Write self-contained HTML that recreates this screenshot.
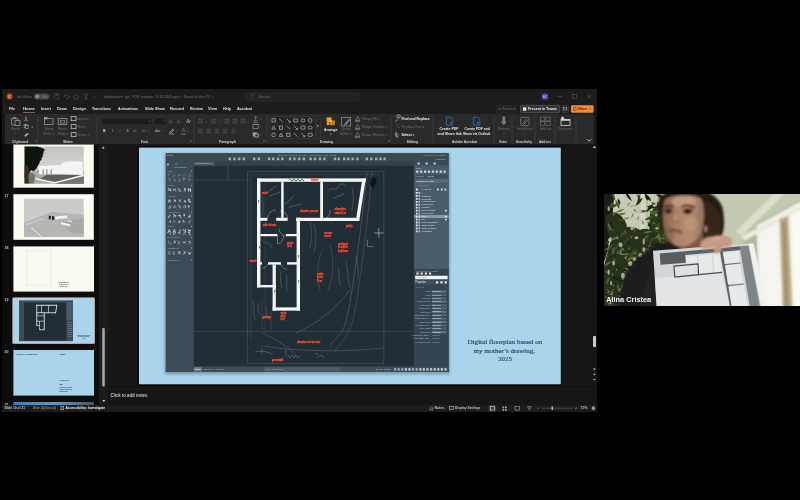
<!DOCTYPE html>
<html><head><meta charset="utf-8"><title>Meeting</title>
<style>html,body{margin:0;padding:0;background:#000;width:800px;height:500px;overflow:hidden}svg{display:block}</style>
</head><body>
<svg width="800" height="500" viewBox="0 0 800 500">
<defs>
<filter id="b03" x="-5%" y="-5%" width="110%" height="110%"><feGaussianBlur stdDeviation="0.45"/></filter>
<filter id="b06" x="-5%" y="-5%" width="110%" height="110%"><feGaussianBlur stdDeviation="0.6"/></filter>
<filter id="b08" x="-10%" y="-10%" width="120%" height="120%"><feGaussianBlur stdDeviation="0.8"/></filter>
<filter id="b1" x="-10%" y="-10%" width="120%" height="120%"><feGaussianBlur stdDeviation="1"/></filter>
<filter id="b2" x="-10%" y="-10%" width="120%" height="120%"><feGaussianBlur stdDeviation="2"/></filter>
<filter id="b3" x="-20%" y="-20%" width="140%" height="140%"><feGaussianBlur stdDeviation="3"/></filter>
<filter id="b5" x="-20%" y="-20%" width="140%" height="140%"><feGaussianBlur stdDeviation="5"/></filter>
<clipPath id="cwin"><rect x="2" y="89" width="595" height="323"/></clipPath>
<clipPath id="ccam"><rect x="604" y="194" width="196" height="112"/></clipPath>
<clipPath id="cthumbs"><rect x="2" y="144.5" width="105" height="260.5"/></clipPath>
<clipPath id="ccad"><rect x="165.6" y="153" width="283.2" height="219"/></clipPath>
</defs>
<rect width="800" height="500" fill="#000"/>
<g clip-path="url(#cwin)" filter="url(#b03)">
<rect x="2.00" y="89.00" width="595.00" height="323.00" fill="#121212"/>
<rect x="2.00" y="89.00" width="595.00" height="25.00" fill="#1a1a1a"/>
<circle cx="9.60" cy="96.40" r="3.10" fill="#b83a1a" />
<circle cx="9.60" cy="96.40" r="1.60" fill="#e89878" />
<circle cx="10.00" cy="96.40" r="0.90" fill="#b83a1a" />
<text x="17.00" y="97.83" font-size="3.8" fill="#5c5c5c" font-weight="bold" font-family='"Liberation Sans",sans-serif' textLength="15.00" lengthAdjust="spacingAndGlyphs" >AutoSave</text>
<rect x="34.00" y="93.40" width="15.50" height="6.20" fill="#4a4a4a" rx="3.1"/>
<circle cx="37.30" cy="96.50" r="2.10" fill="#8a8a8a" />
<text x="42.00" y="97.62" font-size="3.2" fill="#777" font-weight="bold" font-family='"Liberation Sans",sans-serif' textLength="5.00" lengthAdjust="spacingAndGlyphs" >Off</text>
<rect x="54.30" y="94.00" width="4.70" height="5.00" fill="none" stroke="#4c4c4c" stroke-width="0.7" rx="0.6"/>
<rect x="55.50" y="94.00" width="2.30" height="1.60" fill="#4c4c4c"/>
<path d="M64 97 a2.2 2.2 0 1 1 2 2.2" fill="none" stroke="#555" stroke-width="0.8" />
<text x="69.30" y="97.85" font-size="3" fill="#555" font-weight="bold" font-family='"Liberation Sans",sans-serif' textLength="1.30" lengthAdjust="spacingAndGlyphs" >˅</text>
<path d="M74.5 95.2 a2.4 2.4 0 1 0 3.6 0 M76.3 93.6 v2.6" fill="none" stroke="#585858" stroke-width="0.8" />
<path d="M84 94.2 h4.4 l-1.6 2.4 v2.4 h-1.2 v-2.4 z" fill="none" stroke="#555" stroke-width="0.7" />
<text x="93.40" y="97.85" font-size="3" fill="#555" font-weight="bold" font-family='"Liberation Sans",sans-serif' textLength="1.60" lengthAdjust="spacingAndGlyphs" >˅</text>
<text x="104.00" y="97.86" font-size="3.9" fill="#5e5e5e" font-weight="bold" font-family='"Liberation Sans",sans-serif' textLength="109.50" lengthAdjust="spacingAndGlyphs" >alinacristea_ppt_FOR seminar_13.03.2025.pptx  •  Saved to this PC ˅</text>
<rect x="245.60" y="93.00" width="114.00" height="8.00" fill="#222" stroke="#333" stroke-width="0.6" rx="1"/>
<path d="M252.6 96.2 a1.3 1.3 0 1 1 0.01 0 M251.7 97.3 l-1.2 1.4" fill="none" stroke="#5a5a5a" stroke-width="0.6" />
<text x="258.00" y="98.33" font-size="3.8" fill="#5a5a5a" font-weight="bold" font-family='"Liberation Sans",sans-serif' textLength="12.50" lengthAdjust="spacingAndGlyphs" >Search</text>
<circle cx="545.00" cy="96.60" r="4.20" fill="#2c2856" />
<circle cx="545.00" cy="96.60" r="3.20" fill="#4a4590" />
<text x="545.00" y="97.75" font-size="3" fill="#c9c6ee" font-weight="bold" text-anchor="middle" font-family='"Liberation Sans",sans-serif' >AC</text>
<line x1="557.50" y1="96.60" x2="562.00" y2="96.60" stroke="#555" stroke-width="0.6" />
<rect x="572.60" y="94.60" width="3.80" height="3.80" fill="none" stroke="#555" stroke-width="0.6"/>
<path d="M587.3 94.7 l3.6 3.6 M590.9 94.7 l-3.6 3.6" fill="none" stroke="#666" stroke-width="0.6" />
<text x="9.00" y="110.24" font-size="4.4" fill="#e6e6e6" font-weight="bold" font-family='"Liberation Sans",sans-serif' textLength="6.00" lengthAdjust="spacingAndGlyphs" >File</text>
<text x="23.00" y="110.24" font-size="4.4" fill="#e6e6e6" font-weight="bold" font-family='"Liberation Sans",sans-serif' textLength="12.00" lengthAdjust="spacingAndGlyphs" >Home</text>
<text x="41.00" y="110.24" font-size="4.4" fill="#e6e6e6" font-weight="bold" font-family='"Liberation Sans",sans-serif' textLength="10.00" lengthAdjust="spacingAndGlyphs" >Insert</text>
<text x="57.00" y="110.24" font-size="4.4" fill="#e6e6e6" font-weight="bold" font-family='"Liberation Sans",sans-serif' textLength="10.00" lengthAdjust="spacingAndGlyphs" >Draw</text>
<text x="73.00" y="110.24" font-size="4.4" fill="#e6e6e6" font-weight="bold" font-family='"Liberation Sans",sans-serif' textLength="13.00" lengthAdjust="spacingAndGlyphs" >Design</text>
<text x="92.00" y="110.24" font-size="4.4" fill="#e6e6e6" font-weight="bold" font-family='"Liberation Sans",sans-serif' textLength="19.00" lengthAdjust="spacingAndGlyphs" >Transitions</text>
<text x="118.00" y="110.24" font-size="4.4" fill="#e6e6e6" font-weight="bold" font-family='"Liberation Sans",sans-serif' textLength="20.00" lengthAdjust="spacingAndGlyphs" >Animations</text>
<text x="145.00" y="110.24" font-size="4.4" fill="#e6e6e6" font-weight="bold" font-family='"Liberation Sans",sans-serif' textLength="20.00" lengthAdjust="spacingAndGlyphs" >Slide Show</text>
<text x="170.00" y="110.24" font-size="4.4" fill="#e6e6e6" font-weight="bold" font-family='"Liberation Sans",sans-serif' textLength="14.00" lengthAdjust="spacingAndGlyphs" >Record</text>
<text x="190.00" y="110.24" font-size="4.4" fill="#e6e6e6" font-weight="bold" font-family='"Liberation Sans",sans-serif' textLength="13.00" lengthAdjust="spacingAndGlyphs" >Review</text>
<text x="208.00" y="110.24" font-size="4.4" fill="#e6e6e6" font-weight="bold" font-family='"Liberation Sans",sans-serif' textLength="9.00" lengthAdjust="spacingAndGlyphs" >View</text>
<text x="223.00" y="110.24" font-size="4.4" fill="#e6e6e6" font-weight="bold" font-family='"Liberation Sans",sans-serif' textLength="8.00" lengthAdjust="spacingAndGlyphs" >Help</text>
<text x="237.00" y="110.24" font-size="4.4" fill="#e6e6e6" font-weight="bold" font-family='"Liberation Sans",sans-serif' textLength="15.00" lengthAdjust="spacingAndGlyphs" >Acrobat</text>
<rect x="23.00" y="112.00" width="12.00" height="0.70" fill="#c9826c"/>
<rect x="496.00" y="105.50" width="21.00" height="7.00" fill="#232323" stroke="#333" stroke-width="0.5" rx="1"/>
<circle cx="499.60" cy="109.00" r="1.00" fill="#555" />
<text x="502.00" y="110.33" font-size="3.8" fill="#555" font-weight="bold" font-family='"Liberation Sans",sans-serif' textLength="13.00" lengthAdjust="spacingAndGlyphs" >Record</text>
<rect x="520.50" y="105.30" width="39.30" height="7.40" fill="#333" stroke="#6a6a6a" stroke-width="0.6" rx="1.2"/>
<rect x="523.00" y="107.30" width="3.40" height="3.50" fill="#e8e8e8" rx="0.6"/>
<text x="528.00" y="110.36" font-size="3.9" fill="#f2f2f2" font-weight="bold" font-family='"Liberation Sans",sans-serif' textLength="29.00" lengthAdjust="spacingAndGlyphs" >Present in Teams</text>
<rect x="562.00" y="105.50" width="6.40" height="7.00" fill="#262626" stroke="#555" stroke-width="0.5" rx="1"/>
<rect x="563.60" y="107.40" width="3.20" height="2.60" fill="none" stroke="#aaa" stroke-width="0.6"/>
<rect x="571.00" y="105.30" width="22.60" height="7.40" fill="#f08a3c" rx="1.2"/>
<rect x="573.60" y="107.60" width="2.40" height="3.00" fill="none" stroke="#7a3a10" stroke-width="0.6"/>
<text x="577.50" y="110.36" font-size="3.9" fill="#5a2408" font-weight="bold" font-family='"Liberation Sans",sans-serif' textLength="10.00" lengthAdjust="spacingAndGlyphs" >Share</text>
<text x="589.30" y="110.35" font-size="3" fill="#5a2408" font-weight="bold" font-family='"Liberation Sans",sans-serif' textLength="1.70" lengthAdjust="spacingAndGlyphs" >˅</text>
<rect x="5.00" y="113.80" width="589.00" height="30.40" fill="#2b2b2b" rx="1.5"/>
<line x1="38.00" y1="116.00" x2="38.00" y2="143.00" stroke="#3e3e3e" stroke-width="0.6" />
<line x1="97.00" y1="116.00" x2="97.00" y2="143.00" stroke="#3e3e3e" stroke-width="0.6" />
<line x1="194.00" y1="116.00" x2="194.00" y2="143.00" stroke="#3e3e3e" stroke-width="0.6" />
<line x1="267.00" y1="116.00" x2="267.00" y2="143.00" stroke="#3e3e3e" stroke-width="0.6" />
<line x1="391.00" y1="116.00" x2="391.00" y2="143.00" stroke="#3e3e3e" stroke-width="0.6" />
<line x1="433.00" y1="116.00" x2="433.00" y2="143.00" stroke="#3e3e3e" stroke-width="0.6" />
<line x1="494.00" y1="116.00" x2="494.00" y2="143.00" stroke="#3e3e3e" stroke-width="0.6" />
<line x1="512.00" y1="116.00" x2="512.00" y2="143.00" stroke="#3e3e3e" stroke-width="0.6" />
<line x1="535.00" y1="116.00" x2="535.00" y2="143.00" stroke="#3e3e3e" stroke-width="0.6" />
<line x1="555.00" y1="116.00" x2="555.00" y2="143.00" stroke="#3e3e3e" stroke-width="0.6" />
<line x1="576.00" y1="116.00" x2="576.00" y2="143.00" stroke="#3e3e3e" stroke-width="0.6" />
<text x="12.00" y="142.76" font-size="3.6" fill="#d0d0d0" font-weight="bold" font-family='"Liberation Sans",sans-serif' textLength="16.00" lengthAdjust="spacingAndGlyphs" >Clipboard</text>
<text x="63.00" y="142.76" font-size="3.6" fill="#d0d0d0" font-weight="bold" font-family='"Liberation Sans",sans-serif' textLength="10.00" lengthAdjust="spacingAndGlyphs" >Slides</text>
<text x="141.00" y="142.76" font-size="3.6" fill="#d0d0d0" font-weight="bold" font-family='"Liberation Sans",sans-serif' textLength="7.00" lengthAdjust="spacingAndGlyphs" >Font</text>
<text x="219.00" y="142.76" font-size="3.6" fill="#d0d0d0" font-weight="bold" font-family='"Liberation Sans",sans-serif' textLength="17.00" lengthAdjust="spacingAndGlyphs" >Paragraph</text>
<text x="320.00" y="142.76" font-size="3.6" fill="#d0d0d0" font-weight="bold" font-family='"Liberation Sans",sans-serif' textLength="13.00" lengthAdjust="spacingAndGlyphs" >Drawing</text>
<text x="407.00" y="142.76" font-size="3.6" fill="#d0d0d0" font-weight="bold" font-family='"Liberation Sans",sans-serif' textLength="11.00" lengthAdjust="spacingAndGlyphs" >Editing</text>
<text x="452.00" y="142.76" font-size="3.6" fill="#d0d0d0" font-weight="bold" font-family='"Liberation Sans",sans-serif' textLength="25.00" lengthAdjust="spacingAndGlyphs" >Adobe Acrobat</text>
<text x="499.00" y="142.76" font-size="3.6" fill="#d0d0d0" font-weight="bold" font-family='"Liberation Sans",sans-serif' textLength="8.00" lengthAdjust="spacingAndGlyphs" >Voice</text>
<text x="516.00" y="142.76" font-size="3.6" fill="#d0d0d0" font-weight="bold" font-family='"Liberation Sans",sans-serif' textLength="16.00" lengthAdjust="spacingAndGlyphs" >Sensitivity</text>
<text x="539.00" y="142.76" font-size="3.6" fill="#d0d0d0" font-weight="bold" font-family='"Liberation Sans",sans-serif' textLength="12.00" lengthAdjust="spacingAndGlyphs" >Add-ins</text>
<path d="M35.5 140.4 h1.6 v1.6 M35.3 142.2 l1.6 -1.6" fill="none" stroke="#777" stroke-width="0.4" />
<path d="M190 140.4 h1.6 v1.6 M189.8 142.2 l1.6 -1.6" fill="none" stroke="#777" stroke-width="0.4" />
<path d="M263 140.4 h1.6 v1.6 M262.8 142.2 l1.6 -1.6" fill="none" stroke="#777" stroke-width="0.4" />
<path d="M388 140.4 h1.6 v1.6 M387.8 142.2 l1.6 -1.6" fill="none" stroke="#777" stroke-width="0.4" />
<rect x="11.60" y="118.40" width="5.80" height="6.60" fill="none" stroke="#9a9a9a" stroke-width="0.8" rx="0.5"/>
<rect x="15.00" y="120.60" width="5.00" height="4.80" fill="#2b2b2b" stroke="#9a9a9a" stroke-width="0.8"/>
<rect x="13.20" y="117.20" width="2.60" height="1.60" fill="#9a9a9a"/>
<text x="11.00" y="130.46" font-size="3.6" fill="#5e5e5e" font-weight="bold" font-family='"Liberation Sans",sans-serif' textLength="9.00" lengthAdjust="spacingAndGlyphs" >Paste</text>
<text x="14.60" y="134.38" font-size="2.8" fill="#5e5e5e" font-weight="bold" font-family='"Liberation Sans",sans-serif' textLength="1.60" lengthAdjust="spacingAndGlyphs" >˅</text>
<path d="M25.2 116.8 l1.6 3.2 M26.8 116.8 l-1.6 3.2" fill="none" stroke="#9a9a9a" stroke-width="0.6" />
<circle cx="25.00" cy="120.60" r="0.70" fill="#9a9a9a" />
<circle cx="27.00" cy="120.60" r="0.70" fill="#9a9a9a" />
<rect x="24.20" y="124.40" width="2.80" height="3.00" fill="none" stroke="#9a9a9a" stroke-width="0.7"/>
<rect x="25.40" y="125.60" width="2.80" height="3.00" fill="#2b2b2b" stroke="#9a9a9a" stroke-width="0.7"/>
<text x="31.40" y="127.78" font-size="2.8" fill="#9a9a9a" font-weight="bold" font-family='"Liberation Sans",sans-serif' textLength="1.60" lengthAdjust="spacingAndGlyphs" >˅</text>
<path d="M24.6 135.6 l3 -2.6 l0.8 1 l-3 2.6 z" fill="#bbb" stroke="#bbb" stroke-width="0.4" />
<rect x="44.40" y="118.60" width="8.60" height="5.80" fill="none" stroke="#9a9a9a" stroke-width="0.8"/>
<rect x="44.00" y="117.00" width="3.40" height="2.40" fill="#9a9a9a"/>
<text x="44.40" y="129.86" font-size="3.6" fill="#5e5e5e" font-weight="bold" font-family='"Liberation Sans",sans-serif' textLength="9.00" lengthAdjust="spacingAndGlyphs" >New</text>
<text x="43.20" y="134.66" font-size="3.6" fill="#5e5e5e" font-weight="bold" font-family='"Liberation Sans",sans-serif' textLength="11.00" lengthAdjust="spacingAndGlyphs" >Slide ˅</text>
<rect x="58.20" y="118.60" width="8.60" height="5.80" fill="none" stroke="#9a9a9a" stroke-width="0.8"/>
<rect x="60.60" y="120.40" width="4.00" height="2.60" fill="none" stroke="#9a9a9a" stroke-width="0.6"/>
<text x="58.00" y="129.86" font-size="3.6" fill="#5e5e5e" font-weight="bold" font-family='"Liberation Sans",sans-serif' textLength="9.40" lengthAdjust="spacingAndGlyphs" >Reuse</text>
<text x="57.60" y="134.66" font-size="3.6" fill="#5e5e5e" font-weight="bold" font-family='"Liberation Sans",sans-serif' textLength="10.00" lengthAdjust="spacingAndGlyphs" >Slides</text>
<rect x="71.20" y="116.60" width="4.80" height="4.00" fill="none" stroke="#b8b8b8" stroke-width="0.8"/>
<text x="77.40" y="119.86" font-size="3.6" fill="#5e5e5e" font-weight="bold" font-family='"Liberation Sans",sans-serif' textLength="11.60" lengthAdjust="spacingAndGlyphs" >Layout ˅</text>
<rect x="71.20" y="124.60" width="4.80" height="4.00" fill="none" stroke="#b8b8b8" stroke-width="0.8"/>
<text x="77.40" y="127.86" font-size="3.6" fill="#5e5e5e" font-weight="bold" font-family='"Liberation Sans",sans-serif' textLength="8.10" lengthAdjust="spacingAndGlyphs" >Reset</text>
<rect x="71.20" y="132.60" width="4.80" height="4.00" fill="none" stroke="#b8b8b8" stroke-width="0.8"/>
<text x="77.40" y="135.86" font-size="3.6" fill="#5e5e5e" font-weight="bold" font-family='"Liberation Sans",sans-serif' textLength="12.10" lengthAdjust="spacingAndGlyphs" >Section ˅</text>
<rect x="101.00" y="118.00" width="51.40" height="6.40" fill="#1c1c1c" stroke="#3a3a3a" stroke-width="0.5" rx="0.6"/>
<text x="148.60" y="122.38" font-size="2.8" fill="#555" font-weight="bold" font-family='"Liberation Sans",sans-serif' textLength="1.80" lengthAdjust="spacingAndGlyphs" >˅</text>
<rect x="154.00" y="118.00" width="12.60" height="6.40" fill="#1c1c1c" stroke="#3a3a3a" stroke-width="0.5" rx="0.6"/>
<text x="163.40" y="122.38" font-size="2.8" fill="#555" font-weight="bold" font-family='"Liberation Sans",sans-serif' textLength="1.80" lengthAdjust="spacingAndGlyphs" >˅</text>
<text x="169.00" y="122.67" font-size="4.2" fill="#5e5e5e" font-weight="bold" font-family='"Liberation Sans",sans-serif' textLength="4.20" lengthAdjust="spacingAndGlyphs" >A˄</text>
<text x="177.00" y="122.67" font-size="4.2" fill="#5e5e5e" font-weight="bold" font-family='"Liberation Sans",sans-serif' textLength="4.20" lengthAdjust="spacingAndGlyphs" >A˅</text>
<text x="186.00" y="122.81" font-size="4.6" fill="#9a9a9a" font-weight="bold" font-family='"Liberation Sans",sans-serif' textLength="4.40" lengthAdjust="spacingAndGlyphs" >A</text>
<path d="M188.4 122.6 l2 -2" fill="none" stroke="#c9a" stroke-width="0.7" />
<text x="103.20" y="132.47" font-size="4.2" fill="#e8e8e8" font-weight="bold" font-family='"Liberation Sans",sans-serif' textLength="2.20" lengthAdjust="spacingAndGlyphs" >B</text>
<text x="111.60" y="132.47" font-size="4.2" fill="#5e5e5e" font-weight="bold" font-family='"Liberation Sans",sans-serif' textLength="2.20" lengthAdjust="spacingAndGlyphs" >I</text>
<text x="118.40" y="132.47" font-size="4.2" fill="#5e5e5e" font-weight="bold" font-family='"Liberation Sans",sans-serif' textLength="2.20" lengthAdjust="spacingAndGlyphs" >U</text>
<text x="126.40" y="132.47" font-size="4.2" fill="#9a9a9a" font-weight="bold" font-family='"Liberation Sans",sans-serif' textLength="2.20" lengthAdjust="spacingAndGlyphs" >S</text>
<text x="133.00" y="132.47" font-size="4.2" fill="#5e5e5e" font-weight="bold" font-family='"Liberation Sans",sans-serif' textLength="3.60" lengthAdjust="spacingAndGlyphs" >ab</text>
<text x="142.00" y="132.47" font-size="4.2" fill="#5e5e5e" font-weight="bold" font-family='"Liberation Sans",sans-serif' textLength="3.60" lengthAdjust="spacingAndGlyphs" >AV</text>
<text x="147.20" y="132.31" font-size="2.6" fill="#5e5e5e" font-weight="bold" font-family='"Liberation Sans",sans-serif' textLength="1.40" lengthAdjust="spacingAndGlyphs" >˅</text>
<text x="155.00" y="132.47" font-size="4.2" fill="#9a9a9a" font-weight="bold" font-family='"Liberation Sans",sans-serif' textLength="5.00" lengthAdjust="spacingAndGlyphs" >Aa</text>
<text x="161.40" y="132.31" font-size="2.6" fill="#5e5e5e" font-weight="bold" font-family='"Liberation Sans",sans-serif' textLength="1.40" lengthAdjust="spacingAndGlyphs" >˅</text>
<path d="M169.4 132.8 l3.4 -3.6 l1 1 l-3.4 3.6 z" fill="none" stroke="#e8e8e8" stroke-width="0.6" />
<rect x="169.00" y="133.60" width="5.40" height="1.00" fill="#777"/>
<text x="176.00" y="132.31" font-size="2.6" fill="#5e5e5e" font-weight="bold" font-family='"Liberation Sans",sans-serif' textLength="1.40" lengthAdjust="spacingAndGlyphs" >˅</text>
<text x="181.60" y="132.21" font-size="4.6" fill="#5e5e5e" font-weight="bold" font-family='"Liberation Sans",sans-serif' textLength="4.00" lengthAdjust="spacingAndGlyphs" >A</text>
<rect x="181.20" y="133.60" width="4.80" height="1.00" fill="#777"/>
<text x="187.60" y="132.31" font-size="2.6" fill="#5e5e5e" font-weight="bold" font-family='"Liberation Sans",sans-serif' textLength="1.40" lengthAdjust="spacingAndGlyphs" >˅</text>
<line x1="198.00" y1="119.40" x2="203.00" y2="119.40" stroke="#5e5e5e" stroke-width="0.6" />
<line x1="198.00" y1="121.20" x2="203.00" y2="121.20" stroke="#5e5e5e" stroke-width="0.6" />
<line x1="198.00" y1="123.00" x2="203.00" y2="123.00" stroke="#5e5e5e" stroke-width="0.6" />
<line x1="211.00" y1="119.40" x2="216.00" y2="119.40" stroke="#5e5e5e" stroke-width="0.6" />
<line x1="211.00" y1="121.20" x2="216.00" y2="121.20" stroke="#5e5e5e" stroke-width="0.6" />
<line x1="211.00" y1="123.00" x2="216.00" y2="123.00" stroke="#5e5e5e" stroke-width="0.6" />
<line x1="224.40" y1="119.40" x2="229.40" y2="119.40" stroke="#5e5e5e" stroke-width="0.6" />
<line x1="224.40" y1="121.20" x2="229.40" y2="121.20" stroke="#5e5e5e" stroke-width="0.6" />
<line x1="224.40" y1="123.00" x2="229.40" y2="123.00" stroke="#5e5e5e" stroke-width="0.6" />
<line x1="232.40" y1="119.40" x2="237.40" y2="119.40" stroke="#5e5e5e" stroke-width="0.6" />
<line x1="232.40" y1="121.20" x2="237.40" y2="121.20" stroke="#5e5e5e" stroke-width="0.6" />
<line x1="232.40" y1="123.00" x2="237.40" y2="123.00" stroke="#5e5e5e" stroke-width="0.6" />
<line x1="240.60" y1="119.40" x2="245.60" y2="119.40" stroke="#5e5e5e" stroke-width="0.6" />
<line x1="240.60" y1="121.20" x2="245.60" y2="121.20" stroke="#5e5e5e" stroke-width="0.6" />
<line x1="240.60" y1="123.00" x2="245.60" y2="123.00" stroke="#5e5e5e" stroke-width="0.6" />
<text x="205.40" y="122.51" font-size="2.6" fill="#5e5e5e" font-weight="bold" font-family='"Liberation Sans",sans-serif' textLength="1.40" lengthAdjust="spacingAndGlyphs" >˅</text>
<text x="218.40" y="122.51" font-size="2.6" fill="#5e5e5e" font-weight="bold" font-family='"Liberation Sans",sans-serif' textLength="1.40" lengthAdjust="spacingAndGlyphs" >˅</text>
<text x="247.60" y="122.51" font-size="2.6" fill="#5e5e5e" font-weight="bold" font-family='"Liberation Sans",sans-serif' textLength="1.40" lengthAdjust="spacingAndGlyphs" >˅</text>
<line x1="198.00" y1="129.40" x2="202.60" y2="129.40" stroke="#5e5e5e" stroke-width="0.6" />
<line x1="198.00" y1="131.20" x2="202.60" y2="131.20" stroke="#5e5e5e" stroke-width="0.6" />
<line x1="198.00" y1="133.00" x2="202.60" y2="133.00" stroke="#5e5e5e" stroke-width="0.6" />
<line x1="206.40" y1="129.40" x2="211.00" y2="129.40" stroke="#5e5e5e" stroke-width="0.6" />
<line x1="206.40" y1="131.20" x2="211.00" y2="131.20" stroke="#5e5e5e" stroke-width="0.6" />
<line x1="206.40" y1="133.00" x2="211.00" y2="133.00" stroke="#5e5e5e" stroke-width="0.6" />
<line x1="214.60" y1="129.40" x2="219.20" y2="129.40" stroke="#5e5e5e" stroke-width="0.6" />
<line x1="214.60" y1="131.20" x2="219.20" y2="131.20" stroke="#5e5e5e" stroke-width="0.6" />
<line x1="214.60" y1="133.00" x2="219.20" y2="133.00" stroke="#5e5e5e" stroke-width="0.6" />
<line x1="222.80" y1="129.40" x2="227.40" y2="129.40" stroke="#5e5e5e" stroke-width="0.6" />
<line x1="222.80" y1="131.20" x2="227.40" y2="131.20" stroke="#5e5e5e" stroke-width="0.6" />
<line x1="222.80" y1="133.00" x2="227.40" y2="133.00" stroke="#5e5e5e" stroke-width="0.6" />
<line x1="231.40" y1="129.40" x2="234.80" y2="129.40" stroke="#5e5e5e" stroke-width="0.6" />
<line x1="231.40" y1="131.20" x2="234.80" y2="131.20" stroke="#5e5e5e" stroke-width="0.6" />
<line x1="231.40" y1="133.00" x2="234.80" y2="133.00" stroke="#5e5e5e" stroke-width="0.6" />
<text x="236.20" y="132.51" font-size="2.6" fill="#5e5e5e" font-weight="bold" font-family='"Liberation Sans",sans-serif' textLength="1.40" lengthAdjust="spacingAndGlyphs" >˅</text>
<path d="M255.6 116.4 v4.2 M254.2 117.6 l1.4 -1.4 l1.4 1.4" fill="none" stroke="#9a9a9a" stroke-width="0.6" />
<line x1="253.40" y1="120.80" x2="257.80" y2="120.80" stroke="#9a9a9a" stroke-width="0.6" />
<line x1="253.40" y1="122.60" x2="257.80" y2="122.60" stroke="#9a9a9a" stroke-width="0.6" />
<text x="260.00" y="119.71" font-size="2.6" fill="#5e5e5e" font-weight="bold" font-family='"Liberation Sans",sans-serif' textLength="1.40" lengthAdjust="spacingAndGlyphs" >˅</text>
<rect x="253.00" y="124.60" width="5.20" height="4.00" fill="none" stroke="#9a9a9a" stroke-width="0.7"/>
<text x="260.00" y="127.71" font-size="2.6" fill="#5e5e5e" font-weight="bold" font-family='"Liberation Sans",sans-serif' textLength="1.40" lengthAdjust="spacingAndGlyphs" >˅</text>
<rect x="253.00" y="132.80" width="3.40" height="3.20" fill="#888" stroke="#9a9a9a" stroke-width="0.7"/>
<rect x="254.80" y="134.00" width="3.40" height="3.00" fill="#2b2b2b" stroke="#e8e8e8" stroke-width="0.6"/>
<text x="260.00" y="135.71" font-size="2.6" fill="#5e5e5e" font-weight="bold" font-family='"Liberation Sans",sans-serif' textLength="1.40" lengthAdjust="spacingAndGlyphs" >˅</text>
<rect x="270.00" y="116.60" width="46.00" height="22.00" fill="#262626" stroke="#444" stroke-width="0.5" rx="0.6"/>
<rect x="316.00" y="116.60" width="4.40" height="22.00" fill="#2b2b2b" stroke="#444" stroke-width="0.5" rx="0.6"/>
<text x="317.40" y="127.45" font-size="3" fill="#e8e8e8" font-weight="bold" font-family='"Liberation Sans",sans-serif' textLength="1.80" lengthAdjust="spacingAndGlyphs" >▾</text>
<rect x="272.00" y="118.80" width="3.20" height="3.20" fill="none" stroke="#cfcfcf" stroke-width="0.6"/>
<line x1="279.20" y1="118.60" x2="282.80" y2="122.20" stroke="#cfcfcf" stroke-width="0.6" />
<path d="M286.59999999999997 118.60000000000001 L290.2 122.2 M288.59999999999997 122.2 h1.6 v-1.6" fill="none" stroke="#cfcfcf" stroke-width="0.6" />
<rect x="293.60" y="118.90" width="4.00" height="3.00" fill="none" stroke="#cfcfcf" stroke-width="0.6" rx="0.3"/>
<ellipse cx="303" cy="120.4" rx="2" ry="1.5" fill="none" stroke="#cfcfcf" stroke-width="0.6"/>
<rect x="308.60" y="118.60" width="3.20" height="3.60" fill="none" stroke="#cfcfcf" stroke-width="0.6" rx="1"/>
<path d="M271.8 129.2 L273.6 125.8 L275.40000000000003 129.2 z" fill="none" stroke="#cfcfcf" stroke-width="0.6" />
<rect x="279.40" y="126.00" width="3.20" height="3.20" fill="none" stroke="#cfcfcf" stroke-width="0.6"/>
<line x1="286.60" y1="125.80" x2="290.20" y2="129.40" stroke="#cfcfcf" stroke-width="0.6" />
<path d="M293.8 125.8 L297.40000000000003 129.4 M295.8 129.4 h1.6 v-1.6" fill="none" stroke="#cfcfcf" stroke-width="0.6" />
<rect x="301.00" y="126.10" width="4.00" height="3.00" fill="none" stroke="#cfcfcf" stroke-width="0.6" rx="0.3"/>
<ellipse cx="310.2" cy="127.6" rx="2" ry="1.5" fill="none" stroke="#cfcfcf" stroke-width="0.6"/>
<rect x="272.00" y="133.00" width="3.20" height="3.60" fill="none" stroke="#cfcfcf" stroke-width="0.6" rx="1"/>
<path d="M279.2 136.4 L281 133.0 L282.8 136.4 z" fill="none" stroke="#cfcfcf" stroke-width="0.6" />
<rect x="286.80" y="133.20" width="3.20" height="3.20" fill="none" stroke="#cfcfcf" stroke-width="0.6"/>
<line x1="293.80" y1="133.00" x2="297.40" y2="136.60" stroke="#cfcfcf" stroke-width="0.6" />
<path d="M301.2 133.0 L304.8 136.60000000000002 M303.2 136.60000000000002 h1.6 v-1.6" fill="none" stroke="#cfcfcf" stroke-width="0.6" />
<rect x="308.20" y="133.30" width="4.00" height="3.00" fill="none" stroke="#cfcfcf" stroke-width="0.6" rx="0.3"/>
<rect x="326.60" y="117.40" width="5.00" height="4.60" fill="#e8a33a"/>
<rect x="329.60" y="120.40" width="5.20" height="4.80" fill="#d67a1c"/>
<rect x="329.60" y="120.40" width="2.00" height="1.60" fill="#f4d070"/>
<rect x="326.80" y="122.40" width="2.40" height="2.40" fill="#f0c040"/>
<text x="324.00" y="130.53" font-size="3.8" fill="#e8e8e8" font-weight="bold" font-family='"Liberation Sans",sans-serif' textLength="13.40" lengthAdjust="spacingAndGlyphs" >Arrange</text>
<text x="329.80" y="134.58" font-size="2.8" fill="#9a9a9a" font-weight="bold" font-family='"Liberation Sans",sans-serif' textLength="1.80" lengthAdjust="spacingAndGlyphs" >˅</text>
<rect x="341.40" y="117.40" width="9.20" height="8.60" fill="none" stroke="#8a8a8a" stroke-width="0.8"/>
<path d="M344 124.6 l5 -5.4 l1 1 l-5 5.4 z" fill="#888" stroke="#888" stroke-width="0.3" />
<text x="341.40" y="130.46" font-size="3.6" fill="#5e5e5e" font-weight="bold" font-family='"Liberation Sans",sans-serif' textLength="9.20" lengthAdjust="spacingAndGlyphs" >Quick</text>
<text x="340.00" y="134.86" font-size="3.6" fill="#5e5e5e" font-weight="bold" font-family='"Liberation Sans",sans-serif' textLength="12.00" lengthAdjust="spacingAndGlyphs" >Styles ˅</text>
<path d="M355.4 120.39999999999999 l2.2 -3.8 l2.2 3.8 z" fill="none" stroke="#9a9a9a" stroke-width="0.6" />
<rect x="355.00" y="120.80" width="5.00" height="0.80" fill="#888"/>
<text x="361.60" y="119.86" font-size="3.6" fill="#5e5e5e" font-weight="bold" font-family='"Liberation Sans",sans-serif' textLength="18.40" lengthAdjust="spacingAndGlyphs" >Shape Fill ˅</text>
<path d="M355.4 128.4 l2.2 -3.8 l2.2 3.8 z" fill="none" stroke="#9a9a9a" stroke-width="0.6" />
<rect x="355.00" y="128.80" width="5.00" height="0.80" fill="#888"/>
<text x="361.60" y="127.86" font-size="3.6" fill="#5e5e5e" font-weight="bold" font-family='"Liberation Sans",sans-serif' textLength="26.40" lengthAdjust="spacingAndGlyphs" >Shape Outline ˅</text>
<path d="M355.4 136.4 l2.2 -3.8 l2.2 3.8 z" fill="none" stroke="#9a9a9a" stroke-width="0.6" />
<rect x="355.00" y="136.80" width="5.00" height="0.80" fill="#888"/>
<text x="361.60" y="135.86" font-size="3.6" fill="#5e5e5e" font-weight="bold" font-family='"Liberation Sans",sans-serif' textLength="25.40" lengthAdjust="spacingAndGlyphs" >Shape Effects ˅</text>
<path d="M398.6 118 a1.6 1.6 0 1 1 0.01 0 M397.4 119.4 l-1.8 2" fill="none" stroke="#e8e8e8" stroke-width="0.7" />
<text x="401.40" y="120.16" font-size="3.9" fill="#f4f4f4" font-weight="bold" font-family='"Liberation Sans",sans-serif' textLength="28.20" lengthAdjust="spacingAndGlyphs" >Find and Replace</text>
<path d="M396 125.6 l1.4 -1.6 l1.4 1.6 M397 127.4 h2.6" fill="none" stroke="#5e5e5e" stroke-width="0.6" />
<text x="401.40" y="128.06" font-size="3.6" fill="#5e5e5e" font-weight="bold" font-family='"Liberation Sans",sans-serif' textLength="23.00" lengthAdjust="spacingAndGlyphs" >Replace Fonts</text>
<path d="M395.8 132.6 v4 l1.2 -1 l1 2 M395.8 132.6 l3 2.6" fill="none" stroke="#e8e8e8" stroke-width="0.6" />
<text x="401.40" y="136.17" font-size="3.9" fill="#f4f4f4" font-weight="bold" font-family='"Liberation Sans",sans-serif' textLength="10.20" lengthAdjust="spacingAndGlyphs" >Select</text>
<text x="412.60" y="136.18" font-size="2.8" fill="#e8e8e8" font-weight="bold" font-family='"Liberation Sans",sans-serif' textLength="1.60" lengthAdjust="spacingAndGlyphs" >˅</text>
<path d="M446.40000000000003 117.2 h4.4 l2 2 v6 h-6.4 z" fill="none" stroke="#2a6db8" stroke-width="0.9" />
<circle cx="451.20" cy="123.00" r="1.60" fill="#2b2b2b" />
<circle cx="451.20" cy="123.00" r="1.20" fill="#2a6db8" />
<path d="M473.40000000000003 117.2 h4.4 l2 2 v6 h-6.4 z" fill="none" stroke="#2a6db8" stroke-width="0.9" />
<circle cx="478.20" cy="123.00" r="1.60" fill="#2b2b2b" />
<circle cx="478.20" cy="123.00" r="1.20" fill="#2a6db8" />
<text x="439.60" y="130.49" font-size="3.7" fill="#e8e8e8" font-weight="bold" font-family='"Liberation Sans",sans-serif' textLength="18.80" lengthAdjust="spacingAndGlyphs" >Create PDF</text>
<text x="437.60" y="135.29" font-size="3.7" fill="#e8e8e8" font-weight="bold" font-family='"Liberation Sans",sans-serif' textLength="24.20" lengthAdjust="spacingAndGlyphs" >and Share link</text>
<text x="464.60" y="130.49" font-size="3.7" fill="#e8e8e8" font-weight="bold" font-family='"Liberation Sans",sans-serif' textLength="25.20" lengthAdjust="spacingAndGlyphs" >Create PDF and</text>
<text x="463.00" y="135.29" font-size="3.7" fill="#e8e8e8" font-weight="bold" font-family='"Liberation Sans",sans-serif' textLength="27.40" lengthAdjust="spacingAndGlyphs" >Share via Outlook</text>
<path d="M502.4 116.6 h2.8 v5 h1.6 l-3 3.6 l-3 -3.6 h1.6 z" fill="#7a7a7a" stroke="none" stroke-width="0.6" />
<text x="497.40" y="130.46" font-size="3.6" fill="#5e5e5e" font-weight="bold" font-family='"Liberation Sans",sans-serif' textLength="12.60" lengthAdjust="spacingAndGlyphs" >Dictate</text>
<text x="502.80" y="134.58" font-size="2.8" fill="#5e5e5e" font-weight="bold" font-family='"Liberation Sans",sans-serif' textLength="1.80" lengthAdjust="spacingAndGlyphs" >˅</text>
<rect x="520.60" y="117.40" width="8.40" height="8.20" fill="none" stroke="#7a7a7a" stroke-width="0.8" rx="0.8"/>
<path d="M522.6 123.4 l3.8 -4 l1 1 l-3.8 4 z" fill="none" stroke="#9a9a9a" stroke-width="0.6" />
<text x="516.60" y="130.46" font-size="3.6" fill="#5e5e5e" font-weight="bold" font-family='"Liberation Sans",sans-serif' textLength="15.80" lengthAdjust="spacingAndGlyphs" >Sensitivity</text>
<text x="523.60" y="134.58" font-size="2.8" fill="#5e5e5e" font-weight="bold" font-family='"Liberation Sans",sans-serif' textLength="1.80" lengthAdjust="spacingAndGlyphs" >˅</text>
<rect x="540.60" y="117.00" width="4.20" height="3.80" fill="none" stroke="#6e6e6e" stroke-width="0.7"/>
<rect x="540.60" y="121.60" width="4.20" height="3.80" fill="none" stroke="#6e6e6e" stroke-width="0.7"/>
<rect x="546.00" y="117.00" width="4.20" height="3.80" fill="none" stroke="#6e6e6e" stroke-width="0.7"/>
<rect x="546.00" y="121.60" width="4.20" height="3.80" fill="none" stroke="#6e6e6e" stroke-width="0.7"/>
<text x="539.80" y="130.46" font-size="3.6" fill="#5e5e5e" font-weight="bold" font-family='"Liberation Sans",sans-serif' textLength="11.60" lengthAdjust="spacingAndGlyphs" >Add-ins</text>
<rect x="561.00" y="119.40" width="9.00" height="6.00" fill="none" stroke="#dcdcdc" stroke-width="0.8"/>
<rect x="561.00" y="119.40" width="9.00" height="1.40" fill="#cfcfcf"/>
<path d="M562.6 116.2 l0.8 1.4 l1.4 0.6 l-1.4 0.6 l-0.8 1.4 l-0.8 -1.4 l-1.4 -0.6 l1.4 -0.6 z" fill="#e8e8e8" stroke="none" stroke-width="0.6" />
<text x="558.40" y="130.46" font-size="3.6" fill="#5e5e5e" font-weight="bold" font-family='"Liberation Sans",sans-serif' textLength="13.80" lengthAdjust="spacingAndGlyphs" >Designer</text>
<path d="M587.2 139.2 l2 2 l2 -2" fill="none" stroke="#e0e0e0" stroke-width="0.8" />
<rect x="2.00" y="144.40" width="105.00" height="260.60" fill="#0d0d0d"/>
<rect x="98.60" y="144.40" width="8.40" height="260.60" fill="#1a1a1a"/>
<rect x="107.00" y="144.40" width="490.00" height="245.00" fill="#121212"/>
<rect x="107.20" y="144.40" width="0.80" height="260.60" fill="#222"/>
<rect x="108.00" y="389.40" width="489.00" height="15.60" fill="#151515"/>
<line x1="108.00" y1="389.40" x2="597.00" y2="389.40" stroke="#2a2a2a" stroke-width="0.6" />
<text x="110.40" y="396.57" font-size="4.5" fill="#c4c4c4" font-weight="bold" font-family='"Liberation Sans",sans-serif' textLength="37.00" lengthAdjust="spacingAndGlyphs" >Click to add notes</text>
<rect x="591.40" y="144.40" width="5.60" height="244.60" fill="#161616"/>
<path d="M592.8 148 l1.6 -2 l1.6 2 z" fill="#ddd" stroke="none" stroke-width="0.6" />
<rect x="593.00" y="336.00" width="3.00" height="11.00" fill="#c8c8c8" rx="0.8"/>
<path d="M593 368.6 l1.4 1.6 l1.4 -1.6 z" fill="#bbb" stroke="none" stroke-width="0.6" />
<path d="M593 373.8 l1.4 1.6 l1.4 -1.6 z" fill="#bbb" stroke="none" stroke-width="0.6" />
<path d="M593 379 l1.4 1.6 l1.4 -1.6 z" fill="#bbb" stroke="none" stroke-width="0.6" />
<path d="M101.8 148.6 l1.4 -2 l1.4 2 z" fill="#ddd" stroke="none" stroke-width="0.6" />
<rect x="102.20" y="328.00" width="2.60" height="58.60" fill="#a6a6a6" rx="1"/>
<path d="M102.4 400 l1.4 2 l1.4 -2 z" fill="#ddd" stroke="none" stroke-width="0.6" />
<rect x="2.00" y="405.00" width="595.00" height="7.00" fill="#1c1c1c"/>
<text x="4.40" y="409.19" font-size="3.7" fill="#c4c4c4" font-weight="bold" font-family='"Liberation Sans",sans-serif' textLength="20.60" lengthAdjust="spacingAndGlyphs" >Slide 19 of 21</text>
<text x="33.00" y="409.19" font-size="3.7" fill="#8a8a8a" font-weight="bold" font-family='"Liberation Sans",sans-serif' textLength="23.00" lengthAdjust="spacingAndGlyphs" >Afar (Djibouti)</text>
<rect x="61.00" y="406.60" width="2.40" height="3.20" fill="none" stroke="#ddd" stroke-width="0.6"/>
<text x="65.40" y="409.23" font-size="3.8" fill="#f4f4f4" font-weight="bold" font-family='"Liberation Sans",sans-serif' textLength="39.80" lengthAdjust="spacingAndGlyphs" >Accessibility: Investigate</text>
<path d="M429.6 409.8 h3.4 M430.2 409.8 v-2.2 l1.2 -1.2 l1.2 1.2 v2.2" fill="none" stroke="#aaa" stroke-width="0.6" />
<text x="434.40" y="409.16" font-size="3.6" fill="#c4c4c4" font-weight="bold" font-family='"Liberation Sans",sans-serif' textLength="10.00" lengthAdjust="spacingAndGlyphs" >Notes</text>
<rect x="449.40" y="406.40" width="3.80" height="3.00" fill="none" stroke="#ccc" stroke-width="0.6"/>
<text x="455.00" y="409.16" font-size="3.6" fill="#c4c4c4" font-weight="bold" font-family='"Liberation Sans",sans-serif' textLength="25.40" lengthAdjust="spacingAndGlyphs" >Display Settings</text>
<rect x="488.60" y="405.20" width="7.40" height="6.60" fill="#3a3a3a"/>
<rect x="490.20" y="406.60" width="4.20" height="3.40" fill="none" stroke="#ddd" stroke-width="0.6"/>
<rect x="502.40" y="406.60" width="1.80" height="1.60" fill="#aaa"/>
<rect x="502.40" y="409.00" width="1.80" height="1.60" fill="#aaa"/>
<rect x="505.00" y="406.60" width="1.80" height="1.60" fill="#aaa"/>
<rect x="505.00" y="409.00" width="1.80" height="1.60" fill="#aaa"/>
<rect x="515.00" y="406.60" width="4.40" height="3.40" fill="none" stroke="#aaa" stroke-width="0.6"/>
<path d="M527.6 406.6 h3.6 l-1.8 3.4 z" fill="none" stroke="#aaa" stroke-width="0.6" />
<line x1="537.00" y1="408.20" x2="539.00" y2="408.20" stroke="#aaa" stroke-width="0.5" />
<line x1="542.00" y1="408.20" x2="573.00" y2="408.20" stroke="#777" stroke-width="0.5" />
<rect x="551.60" y="406.40" width="1.20" height="3.60" fill="#ddd"/>
<path d="M575 408.2 h2 M576 407.2 v2" fill="none" stroke="#aaa" stroke-width="0.5" />
<text x="580.40" y="409.16" font-size="3.6" fill="#c4c4c4" font-weight="bold" font-family='"Liberation Sans",sans-serif' textLength="7.00" lengthAdjust="spacingAndGlyphs" >71%</text>
<path d="M591.4 408.2 h4 M593.4 406.2 v4" fill="none" stroke="#ccc" stroke-width="0.6" />
<rect x="592.20" y="407.00" width="2.40" height="2.40" fill="none" stroke="#ccc" stroke-width="0.5"/>
</g>
<g clip-path="url(#cthumbs)" filter="url(#b03)">
<text x="4.60" y="197.13" font-size="3.8" fill="#c8c8c8" font-weight="bold" font-family='"Liberation Sans",sans-serif' textLength="4.00" lengthAdjust="spacingAndGlyphs" >17</text>
<text x="4.60" y="249.33" font-size="3.8" fill="#c8c8c8" font-weight="bold" font-family='"Liberation Sans",sans-serif' textLength="4.00" lengthAdjust="spacingAndGlyphs" >18</text>
<text x="4.60" y="301.33" font-size="3.8" fill="#c8c8c8" font-weight="bold" font-family='"Liberation Sans",sans-serif' textLength="4.00" lengthAdjust="spacingAndGlyphs" >19</text>
<text x="4.60" y="353.33" font-size="3.8" fill="#c8c8c8" font-weight="bold" font-family='"Liberation Sans",sans-serif' textLength="4.00" lengthAdjust="spacingAndGlyphs" >20</text>
<text x="4.60" y="405.53" font-size="3.8" fill="#c8c8c8" font-weight="bold" font-family='"Liberation Sans",sans-serif' textLength="4.00" lengthAdjust="spacingAndGlyphs" >21</text>
<rect x="13.40" y="140.00" width="80.40" height="47.70" fill="#fbfaf1"/>
<linearGradient id="gsky" x1="0" x2="0" y1="0" y2="1"><stop offset="0" stop-color="#c2c2c0"/><stop offset="0.45" stop-color="#d0d0ce"/><stop offset="1" stop-color="#bdbdbb"/></linearGradient>
<rect x="24.00" y="146.50" width="59.70" height="37.10" fill="url(#gsky)"/>
<path d="M24 183.6 L24 174 L38 170 L83.7 171 L83.7 183.6 z" fill="#a9a9a7" stroke="none" stroke-width="0.6" />
<path d="M50 172.4 L74 174 L83.7 174.8 L83.7 183.6 L55.5 183.6 L40 179 z" fill="#5f5f5e" stroke="none" stroke-width="0.6" />
<path d="M55.2 183.6 L83.7 177 L83.7 183.6 z" fill="#747473" stroke="none" stroke-width="0.6" />
<path d="M38.6 166 L61 165 L62 162.4 C70 160.8 78 160.6 82.6 161.6 L83 175 L62 174.6 L39 174.6 z" fill="#f4f4f2" stroke="none" stroke-width="0.6" />
<path d="M62 162.6 C70 161 78 160.8 82.6 161.8" fill="none" stroke="#d4d4d2" stroke-width="0.5" />
<rect x="42.60" y="169.40" width="1.20" height="5.20" fill="#8e8e8c"/>
<rect x="46.20" y="169.40" width="1.20" height="5.20" fill="#8e8e8c"/>
<rect x="50.60" y="169.40" width="1.20" height="5.20" fill="#8e8e8c"/>
<path d="M35.4 178 L55 182 L83.7 174.6 L83.7 176.2 L55 183.6 L35.4 179.4 z" fill="#f8f8f6" stroke="none" stroke-width="0.6" />
<path d="M24.6 146.5 L37.6 146.5 C40 148 43 147.4 45.2 150 C42 151.4 44.6 153.6 42.6 154.6 C44 157 40.6 157.6 41.6 160 C38.6 161 40.4 164 38 165 C37.4 168 35.4 170 33 171.6 C31 168 29.6 172 28.4 176 L24.6 178 z" fill="#10150e" stroke="none" stroke-width="0.6" />
<path d="M24.6 166 L28.4 165 L29 183.6 L24.6 183.6 z" fill="#3e2c22" stroke="none" stroke-width="0.6" />
<path d="M28.6 174 C31 171.6 34 173 35 176 L34 183.6 L28.8 183.6 z" fill="#6e7668" stroke="none" stroke-width="0.6" />
<rect x="13.40" y="194.20" width="80.40" height="45.60" fill="#fbfaf1"/>
<rect x="24.00" y="198.70" width="59.70" height="38.30" fill="#cbcbc9"/>
<path d="M24 222 L52.6 211 L83.7 214.4 L83.7 237 L24 237 z" fill="#b6b6b4" stroke="none" stroke-width="0.6" />
<path d="M24 222 L52.6 211 L83.7 214.4" fill="none" stroke="#d6d6d4" stroke-width="0.6" />
<path d="M60 222 L83.7 218 L83.7 234 L70 232 z" fill="#a9a9a7" stroke="none" stroke-width="0.6" />
<path d="M31.4 228 L41.6 236.4" fill="none" stroke="#f0f0ee" stroke-width="1.0" />
<path d="M26 224.6 L42 219 L44 220.4" fill="none" stroke="#dcdcda" stroke-width="0.8" />
<rect x="48.80" y="215.80" width="2.00" height="3.60" fill="#1a1a1a"/>
<rect x="52.00" y="216.20" width="2.20" height="3.60" fill="#1a1a1a"/>
<path d="M55 216.6 L66.8 215.4 L67.4 218 L55.4 219.6 z" fill="#f2f2f0" stroke="none" stroke-width="0.6" />
<path d="M61 222 L70.4 224.6 L70 226.6 L61 224.2 z" fill="#f2f2f0" stroke="none" stroke-width="0.6" />
<path d="M68 220.4 l4 0.6 l-0.2 1.2 l-4 -0.6 z" fill="#ececea" stroke="none" stroke-width="0.6" />
<rect x="13.40" y="246.40" width="80.60" height="45.20" fill="#fbfaf0"/>
<rect x="27.00" y="251.00" width="24.00" height="34.00" fill="none" stroke="#d8d8d0" stroke-width="0.4"/>
<path d="M" fill="none" stroke="#c4c4bc" stroke-width="0.4" />
<path d="3" fill="none" stroke="#c4c4bc" stroke-width="0.4" />
<path d="0" fill="none" stroke="#c4c4bc" stroke-width="0.4" />
<path d=" " fill="none" stroke="#c4c4bc" stroke-width="0.4" />
<path d="2" fill="none" stroke="#c4c4bc" stroke-width="0.4" />
<path d="5" fill="none" stroke="#c4c4bc" stroke-width="0.4" />
<path d="5" fill="none" stroke="#c4c4bc" stroke-width="0.4" />
<path d=" " fill="none" stroke="#c4c4bc" stroke-width="0.4" />
<path d="l" fill="none" stroke="#c4c4bc" stroke-width="0.4" />
<path d="6" fill="none" stroke="#c4c4bc" stroke-width="0.4" />
<path d=" " fill="none" stroke="#c4c4bc" stroke-width="0.4" />
<path d="3" fill="none" stroke="#c4c4bc" stroke-width="0.4" />
<path d=" " fill="none" stroke="#c4c4bc" stroke-width="0.4" />
<path d="M" fill="none" stroke="#c4c4bc" stroke-width="0.4" />
<path d="4" fill="none" stroke="#c4c4bc" stroke-width="0.4" />
<path d="0" fill="none" stroke="#c4c4bc" stroke-width="0.4" />
<path d=" " fill="none" stroke="#c4c4bc" stroke-width="0.4" />
<path d="2" fill="none" stroke="#c4c4bc" stroke-width="0.4" />
<path d="5" fill="none" stroke="#c4c4bc" stroke-width="0.4" />
<path d="2" fill="none" stroke="#c4c4bc" stroke-width="0.4" />
<path d=" " fill="none" stroke="#c4c4bc" stroke-width="0.4" />
<path d="l" fill="none" stroke="#c4c4bc" stroke-width="0.4" />
<path d="4" fill="none" stroke="#c4c4bc" stroke-width="0.4" />
<path d=" " fill="none" stroke="#c4c4bc" stroke-width="0.4" />
<path d="8" fill="none" stroke="#c4c4bc" stroke-width="0.4" />
<path d=" " fill="none" stroke="#c4c4bc" stroke-width="0.4" />
<path d="M" fill="none" stroke="#c4c4bc" stroke-width="0.4" />
<path d="3" fill="none" stroke="#c4c4bc" stroke-width="0.4" />
<path d="2" fill="none" stroke="#c4c4bc" stroke-width="0.4" />
<path d=" " fill="none" stroke="#c4c4bc" stroke-width="0.4" />
<path d="2" fill="none" stroke="#c4c4bc" stroke-width="0.4" />
<path d="6" fill="none" stroke="#c4c4bc" stroke-width="0.4" />
<path d="6" fill="none" stroke="#c4c4bc" stroke-width="0.4" />
<path d=" " fill="none" stroke="#c4c4bc" stroke-width="0.4" />
<path d="l" fill="none" stroke="#c4c4bc" stroke-width="0.4" />
<path d="1" fill="none" stroke="#c4c4bc" stroke-width="0.4" />
<path d="0" fill="none" stroke="#c4c4bc" stroke-width="0.4" />
<path d=" " fill="none" stroke="#c4c4bc" stroke-width="0.4" />
<path d="-" fill="none" stroke="#c4c4bc" stroke-width="0.4" />
<path d="2" fill="none" stroke="#c4c4bc" stroke-width="0.4" />
<path d=" " fill="none" stroke="#c4c4bc" stroke-width="0.4" />
<path d="M" fill="none" stroke="#c4c4bc" stroke-width="0.4" />
<path d="3" fill="none" stroke="#c4c4bc" stroke-width="0.4" />
<path d="6" fill="none" stroke="#c4c4bc" stroke-width="0.4" />
<path d=" " fill="none" stroke="#c4c4bc" stroke-width="0.4" />
<path d="2" fill="none" stroke="#c4c4bc" stroke-width="0.4" />
<path d="7" fill="none" stroke="#c4c4bc" stroke-width="0.4" />
<path d="2" fill="none" stroke="#c4c4bc" stroke-width="0.4" />
<path d=" " fill="none" stroke="#c4c4bc" stroke-width="0.4" />
<path d="l" fill="none" stroke="#c4c4bc" stroke-width="0.4" />
<path d="8" fill="none" stroke="#c4c4bc" stroke-width="0.4" />
<path d=" " fill="none" stroke="#c4c4bc" stroke-width="0.4" />
<path d="6" fill="none" stroke="#c4c4bc" stroke-width="0.4" />
<path d=" " fill="none" stroke="#c4c4bc" stroke-width="0.4" />
<path d="M" fill="none" stroke="#c4c4bc" stroke-width="0.4" />
<path d="4" fill="none" stroke="#c4c4bc" stroke-width="0.4" />
<path d="4" fill="none" stroke="#c4c4bc" stroke-width="0.4" />
<path d=" " fill="none" stroke="#c4c4bc" stroke-width="0.4" />
<path d="2" fill="none" stroke="#c4c4bc" stroke-width="0.4" />
<path d="6" fill="none" stroke="#c4c4bc" stroke-width="0.4" />
<path d="2" fill="none" stroke="#c4c4bc" stroke-width="0.4" />
<path d=" " fill="none" stroke="#c4c4bc" stroke-width="0.4" />
<path d="l" fill="none" stroke="#c4c4bc" stroke-width="0.4" />
<path d="3" fill="none" stroke="#c4c4bc" stroke-width="0.4" />
<path d=" " fill="none" stroke="#c4c4bc" stroke-width="0.4" />
<path d="1" fill="none" stroke="#c4c4bc" stroke-width="0.4" />
<path d="0" fill="none" stroke="#c4c4bc" stroke-width="0.4" />
<path d=" " fill="none" stroke="#c4c4bc" stroke-width="0.4" />
<path d="M" fill="none" stroke="#c4c4bc" stroke-width="0.4" />
<path d="2" fill="none" stroke="#c4c4bc" stroke-width="0.4" />
<path d="9" fill="none" stroke="#c4c4bc" stroke-width="0.4" />
<path d=" " fill="none" stroke="#c4c4bc" stroke-width="0.4" />
<path d="2" fill="none" stroke="#c4c4bc" stroke-width="0.4" />
<path d="7" fill="none" stroke="#c4c4bc" stroke-width="0.4" />
<path d="8" fill="none" stroke="#c4c4bc" stroke-width="0.4" />
<path d=" " fill="none" stroke="#c4c4bc" stroke-width="0.4" />
<path d="l" fill="none" stroke="#c4c4bc" stroke-width="0.4" />
<path d="6" fill="none" stroke="#c4c4bc" stroke-width="0.4" />
<path d=" " fill="none" stroke="#c4c4bc" stroke-width="0.4" />
<path d="2" fill="none" stroke="#c4c4bc" stroke-width="0.4" />
<text x="58.40" y="283.12" font-size="1.5" fill="#222" font-weight="bold" font-family='"Liberation Serif",serif' textLength="10.60" lengthAdjust="spacingAndGlyphs" >Floorplan drawn by</text>
<text x="59.00" y="284.92" font-size="1.5" fill="#222" font-weight="bold" font-family='"Liberation Serif",serif' textLength="9.40" lengthAdjust="spacingAndGlyphs" >my mother, from</text>
<text x="60.00" y="286.72" font-size="1.5" fill="#222" font-weight="bold" font-family='"Liberation Serif",serif' textLength="7.40" lengthAdjust="spacingAndGlyphs" >memory, 2025</text>
<rect x="12.20" y="297.30" width="82.80" height="46.80" fill="#c48f7c" rx="1.6"/>
<rect x="13.00" y="298.10" width="81.20" height="45.20" fill="#a9d4ec" rx="1"/>
<rect x="19.00" y="300.40" width="54.00" height="40.80" fill="#3c4b56"/>
<rect x="24.20" y="302.60" width="42.20" height="37.80" fill="#232e35"/>
<rect x="66.40" y="302.20" width="6.60" height="17.80" fill="#4a5c69"/>
<rect x="36.40" y="304.80" width="20.60" height="0.90" fill="#eef2f2"/>
<rect x="36.40" y="304.80" width="0.80" height="20.80" fill="#eef2f2"/>
<rect x="41.00" y="305.00" width="0.60" height="7.80" fill="#eef2f2"/>
<rect x="48.40" y="305.00" width="0.60" height="7.80" fill="#eef2f2"/>
<rect x="36.40" y="312.40" width="19.60" height="0.80" fill="#eef2f2"/>
<rect x="43.80" y="312.40" width="0.80" height="17.60" fill="#eef2f2"/>
<rect x="36.40" y="315.60" width="7.60" height="0.60" fill="#eef2f2"/>
<rect x="36.40" y="320.80" width="7.60" height="0.60" fill="#eef2f2"/>
<rect x="39.40" y="321.00" width="0.60" height="9.00" fill="#eef2f2"/>
<rect x="36.40" y="325.00" width="3.60" height="0.60" fill="#eef2f2"/>
<rect x="39.40" y="329.40" width="5.20" height="0.80" fill="#eef2f2"/>
<path d="M56.4 304.8 L57.2 304.8 L56 313.2 L55.2 313.2 z" fill="#eef2f2" stroke="none" stroke-width="0.6" />
<rect x="67.40" y="322.00" width="4.80" height="0.70" fill="#6a7c8a"/>
<rect x="67.40" y="324.00" width="4.80" height="0.70" fill="#6a7c8a"/>
<rect x="67.40" y="326.00" width="4.80" height="0.70" fill="#6a7c8a"/>
<rect x="67.40" y="328.00" width="4.80" height="0.70" fill="#6a7c8a"/>
<rect x="67.40" y="330.00" width="4.80" height="0.70" fill="#6a7c8a"/>
<rect x="67.40" y="332.00" width="4.80" height="0.70" fill="#6a7c8a"/>
<rect x="67.40" y="334.00" width="4.80" height="0.70" fill="#6a7c8a"/>
<rect x="67.40" y="336.00" width="4.80" height="0.70" fill="#6a7c8a"/>
<text x="76.80" y="335.72" font-size="1.5" fill="#1c2c3c" font-weight="bold" font-family='"Liberation Serif",serif' textLength="13.60" lengthAdjust="spacingAndGlyphs" >Digital floorplan based on</text>
<text x="78.00" y="337.42" font-size="1.5" fill="#1c2c3c" font-weight="bold" font-family='"Liberation Serif",serif' textLength="11.00" lengthAdjust="spacingAndGlyphs" >my mother’s drawing,</text>
<text x="82.40" y="339.12" font-size="1.5" fill="#1c2c3c" font-weight="bold" font-family='"Liberation Serif",serif' textLength="2.60" lengthAdjust="spacingAndGlyphs" >2025</text>
<rect x="13.40" y="350.00" width="80.60" height="45.60" fill="#a9d4ec"/>
<text x="15.80" y="354.97" font-size="2.2" fill="#1c2c3c" font-weight="bold" font-family='"Liberation Sans",sans-serif' textLength="22.20" lengthAdjust="spacingAndGlyphs" >ALINA CRISTEA</text>
<text x="59.40" y="354.90" font-size="2.0" fill="#1c2c3c" font-weight="bold" font-family='"Liberation Sans",sans-serif' textLength="6.00" lengthAdjust="spacingAndGlyphs" >Thanks</text>
<text x="59.40" y="381.47" font-size="1.9" fill="#1c2c3c" font-weight="bold" font-family='"Liberation Sans",sans-serif' textLength="9.60" lengthAdjust="spacingAndGlyphs" >CONTACT</text>
<text x="59.40" y="384.60" font-size="1.7" fill="#1c2c3c" font-weight="bold" font-family='"Liberation Sans",sans-serif' textLength="3.60" lengthAdjust="spacingAndGlyphs" >Mail</text>
<text x="59.40" y="387.92" font-size="1.5" fill="#1c2c3c" font-weight="bold" font-family='"Liberation Sans",sans-serif' textLength="13.00" lengthAdjust="spacingAndGlyphs" >alina.cristea@mail.com</text>
<text x="59.40" y="389.72" font-size="1.5" fill="#1c2c3c" font-weight="bold" font-family='"Liberation Sans",sans-serif' textLength="12.60" lengthAdjust="spacingAndGlyphs" >Faculty of Architecture</text>
<text x="59.40" y="391.52" font-size="1.5" fill="#1c2c3c" font-weight="bold" font-family='"Liberation Sans",sans-serif' textLength="8.60" lengthAdjust="spacingAndGlyphs" >Spring seminar</text>
<linearGradient id="g21" x1="0" x2="1" y1="0" y2="0"><stop offset="0" stop-color="#2f7fc4"/><stop offset="0.55" stop-color="#5a9ad0"/><stop offset="1" stop-color="#3c5a6c"/></linearGradient>
<rect x="13.40" y="402.00" width="80.60" height="4.00" fill="url(#g21)"/>
</g>
<g filter="url(#b03)">
<rect x="137.60" y="146.60" width="424.60" height="239.00" fill="#0a0a0a"/>
<rect x="139.00" y="147.60" width="421.80" height="236.70" fill="#a9d4ec"/>
<rect x="164.6" y="153.4" width="285.4" height="221" fill="#5b7687" opacity="0.55" filter="url(#b1)"/>
<g clip-path="url(#ccad)">
<rect x="165.60" y="153.20" width="283.20" height="218.80" fill="#3c4b56" rx="1"/>
<rect x="193.60" y="165.50" width="220.60" height="201.10" fill="#232e35"/>
<rect x="165.60" y="153.20" width="283.20" height="8.40" fill="#3a4852"/>
<circle cx="167.70" cy="155.20" r="0.75" fill="#e8564a" />
<circle cx="170.10" cy="155.20" r="0.75" fill="#e8b83a" />
<circle cx="172.50" cy="155.20" r="0.75" fill="#5cc040" />
<text x="278.00" y="156.04" font-size="2.4" fill="#9fb0bb" font-weight="normal" font-family='"Liberation Sans",sans-serif' textLength="58.00" lengthAdjust="spacingAndGlyphs" >Brouillon AutoCAD LT 2024  -  housemalle-dwell-fp.dwg</text>
<text x="423.00" y="155.97" font-size="2.2" fill="#9fb0bb" font-weight="normal" font-family='"Liberation Sans",sans-serif' textLength="23.00" lengthAdjust="spacingAndGlyphs" >Connect Inactive</text>
<rect x="228.60" y="157.60" width="2.40" height="2.60" fill="#b8c6d0" rx="0.3" opacity="0.8"/>
<rect x="233.20" y="157.60" width="2.40" height="2.60" fill="#b8c6d0" rx="0.3" opacity="0.8"/>
<rect x="238.00" y="157.60" width="2.40" height="2.60" fill="#b8c6d0" rx="0.3" opacity="0.8"/>
<rect x="242.60" y="157.60" width="2.40" height="2.60" fill="#b8c6d0" rx="0.3" opacity="0.8"/>
<rect x="253.00" y="157.60" width="2.40" height="2.60" fill="#b8c6d0" rx="0.3" opacity="0.8"/>
<rect x="257.60" y="157.60" width="2.40" height="2.60" fill="#b8c6d0" rx="0.3" opacity="0.8"/>
<rect x="268.00" y="157.60" width="2.40" height="2.60" fill="#b8c6d0" rx="0.3" opacity="0.8"/>
<rect x="272.00" y="157.60" width="2.40" height="2.60" fill="#b8c6d0" rx="0.3" opacity="0.8"/>
<rect x="276.80" y="157.60" width="2.40" height="2.60" fill="#b8c6d0" rx="0.3" opacity="0.8"/>
<rect x="281.20" y="157.60" width="2.40" height="2.60" fill="#b8c6d0" rx="0.3" opacity="0.8"/>
<rect x="288.80" y="157.60" width="2.40" height="2.60" fill="#b8c6d0" rx="0.3" opacity="0.8"/>
<rect x="293.20" y="157.60" width="2.40" height="2.60" fill="#b8c6d0" rx="0.3" opacity="0.8"/>
<rect x="298.00" y="157.60" width="2.40" height="2.60" fill="#b8c6d0" rx="0.3" opacity="0.8"/>
<rect x="302.60" y="157.60" width="2.40" height="2.60" fill="#b8c6d0" rx="0.3" opacity="0.8"/>
<rect x="309.40" y="157.60" width="2.40" height="2.60" fill="#b8c6d0" rx="0.3" opacity="0.8"/>
<rect x="313.80" y="157.60" width="2.40" height="2.60" fill="#b8c6d0" rx="0.3" opacity="0.8"/>
<rect x="318.80" y="157.60" width="2.40" height="2.60" fill="#b8c6d0" rx="0.3" opacity="0.8"/>
<rect x="323.20" y="157.60" width="2.40" height="2.60" fill="#b8c6d0" rx="0.3" opacity="0.8"/>
<rect x="333.80" y="157.60" width="2.40" height="2.60" fill="#b8c6d0" rx="0.3" opacity="0.8"/>
<rect x="337.60" y="157.60" width="2.40" height="2.60" fill="#b8c6d0" rx="0.3" opacity="0.8"/>
<rect x="343.00" y="157.60" width="2.40" height="2.60" fill="#b8c6d0" rx="0.3" opacity="0.8"/>
<rect x="347.00" y="157.60" width="2.40" height="2.60" fill="#b8c6d0" rx="0.3" opacity="0.8"/>
<rect x="351.40" y="157.60" width="2.40" height="2.60" fill="#b8c6d0" rx="0.3" opacity="0.8"/>
<rect x="356.20" y="157.60" width="2.40" height="2.60" fill="#b8c6d0" rx="0.3" opacity="0.8"/>
<rect x="365.60" y="157.60" width="2.40" height="2.60" fill="#b8c6d0" rx="0.3" opacity="0.8"/>
<rect x="370.00" y="157.60" width="2.40" height="2.60" fill="#b8c6d0" rx="0.3" opacity="0.8"/>
<rect x="375.00" y="157.60" width="2.40" height="2.60" fill="#b8c6d0" rx="0.3" opacity="0.8"/>
<rect x="379.40" y="157.60" width="2.40" height="2.60" fill="#b8c6d0" rx="0.3" opacity="0.8"/>
<rect x="383.40" y="157.60" width="2.40" height="2.60" fill="#b8c6d0" rx="0.3" opacity="0.8"/>
<text x="436.00" y="159.77" font-size="2.2" fill="#b0bec8" font-weight="normal" font-family='"Liberation Sans",sans-serif' textLength="10.00" lengthAdjust="spacingAndGlyphs" >Drafting ▾</text>
<rect x="193.60" y="161.60" width="220.60" height="3.90" fill="#33414b"/>
<rect x="193.60" y="161.80" width="20.80" height="3.70" fill="#4b5b67"/>
<text x="195.40" y="164.44" font-size="2.1" fill="#d0dae0" font-weight="normal" font-family='"Liberation Sans",sans-serif' textLength="15.00" lengthAdjust="spacingAndGlyphs" >housemalle-dwell-fp</text>
<text x="211.40" y="164.54" font-size="2.4" fill="#d0dae0" font-weight="normal" font-family='"Liberation Sans",sans-serif' textLength="1.40" lengthAdjust="spacingAndGlyphs" >×</text>
<rect x="165.60" y="161.60" width="28.00" height="210.40" fill="#3c4b56"/>
<circle cx="168.00" cy="164.40" r="0.90" fill="#cfd9e0" />
<text x="171.00" y="165.24" font-size="2.4" fill="#8ea0ac" font-weight="normal" font-family='"Liberation Sans",sans-serif' textLength="7.00" lengthAdjust="spacingAndGlyphs" >⌂  ☰</text>
<text x="175.00" y="168.44" font-size="2.4" fill="#a8b8c2" font-weight="normal" font-family='"Liberation Sans",sans-serif' textLength="11.00" lengthAdjust="spacingAndGlyphs" >Drafting</text>
<text x="167.40" y="171.81" font-size="2.3" fill="#9fb0bb" font-weight="normal" font-family='"Liberation Sans",sans-serif' textLength="5.00" lengthAdjust="spacingAndGlyphs" >Draw</text>
<path d="M191.4 170.3 l1.2 0.7 l-1.2 0.7 z" fill="#cfd9e0" stroke="none" stroke-width="0.6" />
<path d="M168.5 175.7 L168.2 175.3 M169.1 173.7 L169.5 173.6 M169.3 173.7 L168.3 174.9 " fill="none" stroke="#eef3f6" stroke-width="0.75" opacity="0.28" stroke-linecap="round"/>
<path d="M173.7 175.6 L175.8 175.5 M174.2 176.8 L173.1 176.4 M173.9 174.0 L173.4 174.5 " fill="none" stroke="#eef3f6" stroke-width="0.75" opacity="0.24" stroke-linecap="round"/>
<path d="M179.7 175.7 L179.1 175.4 M178.2 173.7 L178.6 175.8 M179.3 174.6 L179.8 175.0 " fill="none" stroke="#eef3f6" stroke-width="0.75" opacity="0.25" stroke-linecap="round"/>
<circle cx="180.19" cy="175.60" r="0.60" fill="#eef3f6" opacity="0.25"/>
<path d="M184.7 175.3 L185.6 176.0 M183.9 176.8 L183.4 174.9 M185.3 174.0 L184.5 173.6 " fill="none" stroke="#eef3f6" stroke-width="0.75" opacity="0.26" stroke-linecap="round"/>
<path d="M189.7 176.5 L188.9 175.9 M189.8 175.5 L189.4 176.4 M190.8 175.1 L190.0 173.7 " fill="none" stroke="#eef3f6" stroke-width="0.75" opacity="0.36" stroke-linecap="round"/>
<path d="M171.0 181.1 L168.9 179.6 M170.0 178.4 L169.4 178.9 M168.4 178.5 L170.3 178.7 " fill="none" stroke="#eef3f6" stroke-width="0.75" opacity="0.29" stroke-linecap="round"/>
<circle cx="169.38" cy="180.74" r="0.60" fill="#eef3f6" opacity="0.29"/>
<path d="M174.3 180.2 L175.7 181.1 M175.6 179.2 L174.2 179.5 M175.7 181.6 L173.5 178.9 " fill="none" stroke="#eef3f6" stroke-width="0.75" opacity="0.21" stroke-linecap="round"/>
<circle cx="174.07" cy="179.97" r="0.60" fill="#eef3f6" opacity="0.21"/>
<path d="M178.8 178.3 L179.3 179.6 M179.7 181.5 L180.1 180.1 M179.9 180.6 L178.2 181.4 " fill="none" stroke="#eef3f6" stroke-width="0.75" opacity="0.29" stroke-linecap="round"/>
<path d="M185.4 179.6 L184.2 178.7 M184.9 178.5 L183.2 179.0 M183.5 179.5 L183.2 178.3 " fill="none" stroke="#eef3f6" stroke-width="0.75" opacity="0.33" stroke-linecap="round"/>
<circle cx="183.80" cy="179.73" r="0.60" fill="#eef3f6" opacity="0.33"/>
<path d="M190.6 180.4 L188.4 179.2 M189.0 179.5 L188.4 181.2 M191.0 179.9 L189.5 178.6 " fill="none" stroke="#eef3f6" stroke-width="0.75" opacity="0.20" stroke-linecap="round"/>
<circle cx="189.29" cy="179.53" r="0.60" fill="#eef3f6" opacity="0.20"/>
<text x="167.40" y="186.31" font-size="2.3" fill="#9fb0bb" font-weight="normal" font-family='"Liberation Sans",sans-serif' textLength="7.50" lengthAdjust="spacingAndGlyphs" >Modify</text>
<path d="M191.4 184.8 l1.2 0.7 l-1.2 0.7 z" fill="#cfd9e0" stroke="none" stroke-width="0.6" />
<path d="M168.5 188.2 L170.9 189.9 M168.4 189.9 L168.1 189.9 M170.9 191.0 L170.1 189.0 " fill="none" stroke="#eef3f6" stroke-width="0.75" opacity="0.88" stroke-linecap="round"/>
<circle cx="168.93" cy="190.34" r="0.60" fill="#eef3f6" opacity="0.88"/>
<path d="M175.3 189.2 L173.7 190.9 M176.0 191.0 L175.4 190.9 M175.2 188.9 L174.6 189.3 " fill="none" stroke="#eef3f6" stroke-width="0.75" opacity="0.75" stroke-linecap="round"/>
<circle cx="173.66" cy="189.36" r="0.60" fill="#eef3f6" opacity="0.75"/>
<path d="M180.1 191.4 L179.3 191.3 M181.0 191.3 L179.1 188.8 M178.7 188.8 L178.6 190.2 " fill="none" stroke="#eef3f6" stroke-width="0.75" opacity="0.63" stroke-linecap="round"/>
<path d="M184.4 190.3 L185.4 188.4 M185.0 191.2 L185.3 190.7 M184.4 188.7 L185.4 189.2 " fill="none" stroke="#eef3f6" stroke-width="0.75" opacity="0.88" stroke-linecap="round"/>
<path d="M189.2 189.5 L190.8 190.6 M188.5 188.5 L188.5 191.2 M190.4 188.6 L190.5 191.4 " fill="none" stroke="#eef3f6" stroke-width="0.75" opacity="0.94" stroke-linecap="round"/>
<text x="167.40" y="196.81" font-size="2.3" fill="#9fb0bb" font-weight="normal" font-family='"Liberation Sans",sans-serif' textLength="7.50" lengthAdjust="spacingAndGlyphs" >Layers</text>
<path d="M191.4 195.3 l1.2 0.7 l-1.2 0.7 z" fill="#cfd9e0" stroke="none" stroke-width="0.6" />
<path d="M169.6 199.7 L168.0 202.6 M169.9 201.1 L170.8 200.8 M170.6 202.1 L168.6 200.2 " fill="none" stroke="#eef3f6" stroke-width="0.75" opacity="0.67" stroke-linecap="round"/>
<circle cx="169.08" cy="201.17" r="0.60" fill="#eef3f6" opacity="0.67"/>
<path d="M174.3 199.7 L175.7 200.5 M174.4 201.3 L175.7 200.7 M175.8 201.0 L174.6 201.1 " fill="none" stroke="#eef3f6" stroke-width="0.75" opacity="0.63" stroke-linecap="round"/>
<circle cx="174.48" cy="200.37" r="0.60" fill="#eef3f6" opacity="0.63"/>
<path d="M180.4 199.9 L179.4 201.8 M179.7 200.4 L179.6 201.2 M180.4 199.7 L179.7 200.1 " fill="none" stroke="#eef3f6" stroke-width="0.75" opacity="0.52" stroke-linecap="round"/>
<circle cx="180.14" cy="201.02" r="0.60" fill="#eef3f6" opacity="0.52"/>
<path d="M185.3 202.4 L184.3 201.4 M184.5 201.0 L185.1 200.8 M184.6 200.9 L185.8 201.7 " fill="none" stroke="#eef3f6" stroke-width="0.75" opacity="0.76" stroke-linecap="round"/>
<path d="M188.8 201.2 L190.8 202.2 M188.4 199.7 L189.3 199.5 M188.7 199.5 L190.0 202.0 " fill="none" stroke="#eef3f6" stroke-width="0.75" opacity="0.93" stroke-linecap="round"/>
<path d="M170.1 207.5 L168.4 208.3 M170.9 206.0 L170.9 206.7 M169.5 208.7 L170.5 205.8 " fill="none" stroke="#eef3f6" stroke-width="0.75" opacity="0.50" stroke-linecap="round"/>
<circle cx="169.63" cy="206.68" r="0.60" fill="#eef3f6" opacity="0.50"/>
<path d="M174.0 207.8 L173.1 207.2 M174.3 205.4 L174.0 207.4 M174.5 205.5 L176.0 208.0 " fill="none" stroke="#eef3f6" stroke-width="0.75" opacity="0.51" stroke-linecap="round"/>
<path d="M178.8 205.4 L180.3 206.2 M178.4 206.7 L180.7 208.1 M178.8 205.8 L180.8 207.2 " fill="none" stroke="#eef3f6" stroke-width="0.75" opacity="0.48" stroke-linecap="round"/>
<path d="M183.2 207.6 L184.3 205.5 M185.8 207.5 L185.4 205.6 M185.6 205.5 L185.6 206.8 " fill="none" stroke="#eef3f6" stroke-width="0.75" opacity="0.47" stroke-linecap="round"/>
<circle cx="184.71" cy="207.85" r="0.60" fill="#eef3f6" opacity="0.47"/>
<path d="M188.4 207.1 L188.7 205.7 M188.5 205.5 L188.6 206.4 M188.9 207.9 L188.9 207.0 " fill="none" stroke="#eef3f6" stroke-width="0.75" opacity="0.54" stroke-linecap="round"/>
<circle cx="189.29" cy="206.04" r="0.60" fill="#eef3f6" opacity="0.54"/>
<text x="167.40" y="212.81" font-size="2.3" fill="#9fb0bb" font-weight="normal" font-family='"Liberation Sans",sans-serif' textLength="12.50" lengthAdjust="spacingAndGlyphs" >Annotation</text>
<path d="M191.4 211.3 l1.2 0.7 l-1.2 0.7 z" fill="#cfd9e0" stroke="none" stroke-width="0.6" />
<path d="M168.0 217.0 L169.7 215.1 M169.4 217.7 L168.3 217.3 M169.3 216.2 L170.5 215.8 " fill="none" stroke="#eef3f6" stroke-width="0.75" opacity="0.63" stroke-linecap="round"/>
<path d="M175.9 215.7 L175.5 216.9 M174.9 215.9 L174.0 214.7 M173.4 214.7 L175.2 215.4 " fill="none" stroke="#eef3f6" stroke-width="0.75" opacity="0.82" stroke-linecap="round"/>
<circle cx="173.77" cy="216.88" r="0.60" fill="#eef3f6" opacity="0.82"/>
<path d="M180.0 215.5 L178.7 215.5 M179.4 215.0 L179.3 215.4 M180.9 217.8 L179.6 215.3 " fill="none" stroke="#eef3f6" stroke-width="0.75" opacity="0.89" stroke-linecap="round"/>
<path d="M184.1 214.5 L184.1 216.1 M184.5 215.2 L184.5 214.5 M183.8 214.8 L184.2 214.6 " fill="none" stroke="#eef3f6" stroke-width="0.75" opacity="0.65" stroke-linecap="round"/>
<circle cx="184.21" cy="215.67" r="0.60" fill="#eef3f6" opacity="0.65"/>
<path d="M189.6 217.1 L190.0 216.9 M190.6 215.8 L189.0 217.8 M188.4 217.0 L189.9 214.6 " fill="none" stroke="#eef3f6" stroke-width="0.75" opacity="0.77" stroke-linecap="round"/>
<path d="M169.9 222.4 L170.4 220.4 M169.6 221.6 L170.5 222.6 M170.5 221.9 L170.7 222.2 " fill="none" stroke="#eef3f6" stroke-width="0.75" opacity="0.57" stroke-linecap="round"/>
<path d="M173.1 220.4 L174.1 220.3 M175.5 221.8 L174.9 222.0 M175.0 221.6 L173.0 222.6 " fill="none" stroke="#eef3f6" stroke-width="0.75" opacity="0.39" stroke-linecap="round"/>
<path d="M179.6 222.1 L178.2 222.4 M178.8 220.2 L178.8 222.4 M178.6 222.4 L180.9 221.6 " fill="none" stroke="#eef3f6" stroke-width="0.75" opacity="0.47" stroke-linecap="round"/>
<circle cx="179.56" cy="221.97" r="0.60" fill="#eef3f6" opacity="0.47"/>
<path d="M184.9 222.1 L183.2 220.4 M183.8 222.4 L183.9 221.8 M183.0 220.1 L183.8 222.2 " fill="none" stroke="#eef3f6" stroke-width="0.75" opacity="0.54" stroke-linecap="round"/>
<path d="M188.9 221.7 L189.4 221.5 M188.4 222.9 L188.6 223.2 M190.8 220.0 L189.4 222.7 " fill="none" stroke="#eef3f6" stroke-width="0.75" opacity="0.51" stroke-linecap="round"/>
<text x="167.40" y="227.00" font-size="2.3" fill="#9fb0bb" font-weight="normal" font-family='"Liberation Sans",sans-serif' textLength="6.25" lengthAdjust="spacingAndGlyphs" >Block</text>
<path d="M191.4 225.5 l1.2 0.7 l-1.2 0.7 z" fill="#cfd9e0" stroke="none" stroke-width="0.6" />
<text x="167.60" y="233.25" font-size="5" fill="#e8eef2" font-weight="normal" font-family='"Liberation Sans",sans-serif' textLength="3.60" lengthAdjust="spacingAndGlyphs" >A</text>
<text x="172.60" y="233.25" font-size="5" fill="#e8eef2" font-weight="normal" font-family='"Liberation Sans",sans-serif' textLength="3.60" lengthAdjust="spacingAndGlyphs" >A</text>
<path d="M180.8 230.2 L179.7 230.0 M179.6 232.7 L178.4 232.3 M179.5 232.5 L180.1 230.3 " fill="none" stroke="#eef3f6" stroke-width="0.75" opacity="0.61" stroke-linecap="round"/>
<path d="M183.1 229.5 L184.5 231.0 M183.9 230.0 L184.0 230.6 M185.5 229.5 L185.3 232.4 " fill="none" stroke="#eef3f6" stroke-width="0.75" opacity="0.73" stroke-linecap="round"/>
<circle cx="185.45" cy="231.63" r="0.60" fill="#eef3f6" opacity="0.73"/>
<path d="M188.9 230.8 L189.2 232.9 M189.8 230.7 L189.3 230.4 M188.1 229.8 L190.5 230.5 " fill="none" stroke="#eef3f6" stroke-width="0.75" opacity="0.91" stroke-linecap="round"/>
<path d="M168.8 233.4 L168.6 233.0 M170.9 234.7 L170.4 233.8 M170.7 234.9 L169.6 234.1 " fill="none" stroke="#eef3f6" stroke-width="0.75" opacity="0.33" stroke-linecap="round"/>
<circle cx="170.06" cy="233.30" r="0.60" fill="#eef3f6" opacity="0.33"/>
<path d="M174.9 232.7 L173.1 234.9 M173.4 233.3 L174.0 232.7 M175.2 235.0 L173.8 233.9 " fill="none" stroke="#eef3f6" stroke-width="0.75" opacity="0.44" stroke-linecap="round"/>
<circle cx="174.71" cy="233.19" r="0.60" fill="#eef3f6" opacity="0.44"/>
<path d="M178.5 232.4 L180.7 233.4 M178.7 234.8 L181.0 233.2 M178.4 232.4 L178.3 232.9 " fill="none" stroke="#eef3f6" stroke-width="0.75" opacity="0.31" stroke-linecap="round"/>
<circle cx="179.08" cy="232.92" r="0.60" fill="#eef3f6" opacity="0.31"/>
<path d="M185.7 234.2 L184.2 233.1 M184.6 233.0 L184.0 231.9 M183.8 235.0 L183.4 233.4 " fill="none" stroke="#eef3f6" stroke-width="0.75" opacity="0.40" stroke-linecap="round"/>
<path d="M188.6 232.6 L188.7 233.1 M189.3 234.9 L190.5 234.7 M188.1 231.8 L190.1 234.7 " fill="none" stroke="#eef3f6" stroke-width="0.75" opacity="0.47" stroke-linecap="round"/>
<circle cx="189.77" cy="232.40" r="0.60" fill="#eef3f6" opacity="0.47"/>
<text x="167.40" y="238.31" font-size="2.3" fill="#9fb0bb" font-weight="normal" font-family='"Liberation Sans",sans-serif' textLength="12.50" lengthAdjust="spacingAndGlyphs" >Properties</text>
<path d="M191.4 236.8 l1.2 0.7 l-1.2 0.7 z" fill="#cfd9e0" stroke="none" stroke-width="0.6" />
<path d="M170.8 243.5 L170.6 244.0 M168.7 241.1 L168.5 242.5 M170.0 243.9 L170.2 242.9 " fill="none" stroke="#eef3f6" stroke-width="0.75" opacity="0.51" stroke-linecap="round"/>
<path d="M174.7 240.8 L175.3 241.5 M175.8 242.9 L173.9 241.1 M173.8 242.9 L175.1 241.1 " fill="none" stroke="#eef3f6" stroke-width="0.75" opacity="0.53" stroke-linecap="round"/>
<circle cx="174.65" cy="242.57" r="0.60" fill="#eef3f6" opacity="0.53"/>
<path d="M178.7 242.7 L178.0 241.7 M179.4 244.0 L179.9 243.7 M179.4 241.5 L178.7 244.0 " fill="none" stroke="#eef3f6" stroke-width="0.75" opacity="0.51" stroke-linecap="round"/>
<path d="M183.1 242.4 L185.0 242.1 M183.8 243.0 L185.8 241.5 M183.1 241.8 L184.3 243.0 " fill="none" stroke="#eef3f6" stroke-width="0.75" opacity="0.48" stroke-linecap="round"/>
<circle cx="185.19" cy="242.88" r="0.60" fill="#eef3f6" opacity="0.48"/>
<path d="M188.6 244.0 L188.9 243.5 M188.7 241.5 L190.3 241.7 M190.9 242.4 L188.6 241.5 " fill="none" stroke="#eef3f6" stroke-width="0.75" opacity="0.54" stroke-linecap="round"/>
<circle cx="189.93" cy="243.30" r="0.60" fill="#eef3f6" opacity="0.54"/>
<text x="167.40" y="248.81" font-size="2.3" fill="#9fb0bb" font-weight="normal" font-family='"Liberation Sans",sans-serif' textLength="11.25" lengthAdjust="spacingAndGlyphs" >Utilities</text>
<path d="M191.4 247.3 l1.2 0.7 l-1.2 0.7 z" fill="#cfd9e0" stroke="none" stroke-width="0.6" />
<path d="M169.2 251.8 L170.9 251.6 M168.2 251.3 L169.2 254.2 M170.7 253.6 L171.0 254.3 " fill="none" stroke="#eef3f6" stroke-width="0.75" opacity="0.37" stroke-linecap="round"/>
<circle cx="168.97" cy="253.67" r="0.60" fill="#eef3f6" opacity="0.37"/>
<path d="M173.1 253.4 L174.1 252.4 M174.0 251.7 L173.0 252.1 M174.1 254.3 L173.4 254.4 " fill="none" stroke="#eef3f6" stroke-width="0.75" opacity="0.53" stroke-linecap="round"/>
<circle cx="174.31" cy="253.44" r="0.60" fill="#eef3f6" opacity="0.53"/>
<path d="M179.3 251.3 L179.4 252.4 M180.8 251.8 L179.1 254.1 M178.1 252.5 L180.4 253.7 " fill="none" stroke="#eef3f6" stroke-width="0.75" opacity="0.55" stroke-linecap="round"/>
<circle cx="178.67" cy="251.93" r="0.60" fill="#eef3f6" opacity="0.55"/>
<path d="M183.8 253.6 L185.7 252.3 M183.8 254.4 L184.9 252.0 M185.1 252.2 L183.8 251.1 " fill="none" stroke="#eef3f6" stroke-width="0.75" opacity="0.58" stroke-linecap="round"/>
<path d="M189.9 254.3 L188.1 251.9 M189.4 254.4 L190.9 252.4 M188.8 252.6 L189.5 254.3 " fill="none" stroke="#eef3f6" stroke-width="0.75" opacity="0.58" stroke-linecap="round"/>
<circle cx="190.21" cy="253.28" r="0.60" fill="#eef3f6" opacity="0.58"/>
<text x="167.40" y="260.81" font-size="2.3" fill="#9fb0bb" font-weight="normal" font-family='"Liberation Sans",sans-serif' textLength="11.25" lengthAdjust="spacingAndGlyphs" >Clipboard</text>
<path d="M191.4 259.3 l1.2 0.7 l-1.2 0.7 z" fill="#cfd9e0" stroke="none" stroke-width="0.6" />
<rect x="414.20" y="161.60" width="34.60" height="210.40" fill="#4a5c69"/>
<rect x="414.20" y="161.60" width="34.60" height="3.90" fill="#3a4852"/>
<rect x="417.60" y="162.40" width="2.20" height="2.20" fill="#d0dae0" rx="0.3"/>
<rect x="425.60" y="162.40" width="2.20" height="2.20" fill="#d0dae0" rx="0.3"/>
<rect x="433.60" y="162.40" width="2.20" height="2.20" fill="#d0dae0" rx="0.3"/>
<text x="416.00" y="168.61" font-size="2.3" fill="#c6d2da" font-weight="normal" font-family='"Liberation Sans",sans-serif' textLength="5.00" lengthAdjust="spacingAndGlyphs" >Layers</text>
<rect x="416.20" y="170.60" width="2.20" height="2.20" fill="#e4ecf0" rx="0.3" opacity="0.85"/>
<rect x="420.10" y="170.60" width="2.20" height="2.20" fill="#e4ecf0" rx="0.3" opacity="0.85"/>
<rect x="424.00" y="170.60" width="2.20" height="2.20" fill="#e4ecf0" rx="0.3" opacity="0.85"/>
<rect x="427.90" y="170.60" width="2.20" height="2.20" fill="#e4ecf0" rx="0.3" opacity="0.85"/>
<rect x="431.80" y="170.60" width="2.20" height="2.20" fill="#e4ecf0" rx="0.3" opacity="0.85"/>
<rect x="435.70" y="170.60" width="2.20" height="2.20" fill="#e4ecf0" rx="0.3" opacity="0.85"/>
<rect x="439.60" y="170.60" width="2.20" height="2.20" fill="#e4ecf0" rx="0.3" opacity="0.85"/>
<rect x="443.50" y="170.60" width="2.20" height="2.20" fill="#e4ecf0" rx="0.3" opacity="0.85"/>
<rect x="415.40" y="174.80" width="32.20" height="3.60" fill="#3e4e5a" rx="0.4"/>
<text x="416.60" y="177.26" font-size="1.9" fill="#b8c6d0" font-weight="normal" font-family='"Liberation Sans",sans-serif' textLength="7.40" lengthAdjust="spacingAndGlyphs" >Unsaved Layer State</text>
<text x="428.00" y="177.37" font-size="2.2" fill="#e4ecf0" font-weight="normal" font-family='"Liberation Sans",sans-serif' textLength="6.00" lengthAdjust="spacingAndGlyphs" >Layers</text>
<rect x="415.40" y="179.60" width="32.20" height="3.20" fill="#5b6e7c" rx="0.4"/>
<text x="416.60" y="181.97" font-size="2.2" fill="#f0f4f6" font-weight="normal" font-family='"Liberation Sans",sans-serif' textLength="17.40" lengthAdjust="spacingAndGlyphs" >Unsaved Layer State</text>
<text x="418.00" y="185.94" font-size="2.1" fill="#9fb0bb" font-weight="normal" font-family='"Liberation Sans",sans-serif' textLength="10.00" lengthAdjust="spacingAndGlyphs" >Hide Layer List</text>
<text x="421.00" y="190.37" font-size="2.2" fill="#d6e0e6" font-weight="normal" font-family='"Liberation Sans",sans-serif' textLength="10.00" lengthAdjust="spacingAndGlyphs" >All layers</text>
<rect x="416.00" y="188.40" width="2.00" height="2.20" fill="#dfe8ee" rx="0.3"/>
<rect x="437.00" y="188.60" width="1.60" height="1.80" fill="#dfe8ee" rx="0.2"/>
<rect x="441.00" y="188.60" width="1.60" height="1.80" fill="#dfe8ee" rx="0.2"/>
<rect x="444.60" y="188.60" width="1.60" height="1.80" fill="#dfe8ee" rx="0.2"/>
<rect x="416.00" y="192.00" width="1.60" height="1.80" fill="#e8eef2" rx="0.2"/>
<rect x="418.60" y="192.00" width="1.40" height="1.80" fill="#dfe8ee" rx="0.2" opacity=".8"/>
<text x="421.60" y="193.60" font-size="2.0" fill="#e0e8ee" font-weight="normal" font-family='"Liberation Sans",sans-serif' textLength="1.05" lengthAdjust="spacingAndGlyphs" >0</text>
<rect x="416.00" y="194.96" width="1.60" height="1.80" fill="#e8eef2" rx="0.2"/>
<rect x="418.60" y="194.96" width="1.40" height="1.80" fill="#dfe8ee" rx="0.2" opacity=".8"/>
<text x="421.60" y="196.56" font-size="2.0" fill="#e0e8ee" font-weight="normal" font-family='"Liberation Sans",sans-serif' textLength="9.45" lengthAdjust="spacingAndGlyphs" >Cotations</text>
<rect x="416.00" y="197.92" width="1.60" height="1.80" fill="#e8eef2" rx="0.2"/>
<rect x="418.60" y="197.92" width="1.40" height="1.80" fill="#dfe8ee" rx="0.2" opacity=".8"/>
<text x="421.60" y="199.52" font-size="2.0" fill="#e0e8ee" font-weight="normal" font-family='"Liberation Sans",sans-serif' textLength="9.45" lengthAdjust="spacingAndGlyphs" >Defpoints</text>
<rect x="416.00" y="200.88" width="1.60" height="1.80" fill="#e8eef2" rx="0.2"/>
<rect x="418.60" y="200.88" width="1.40" height="1.80" fill="#dfe8ee" rx="0.2" opacity=".8"/>
<text x="421.60" y="202.48" font-size="2.0" fill="#e0e8ee" font-weight="normal" font-family='"Liberation Sans",sans-serif' textLength="13.65" lengthAdjust="spacingAndGlyphs" >Hachures-sols</text>
<rect x="416.00" y="203.84" width="1.60" height="1.80" fill="#e8eef2" rx="0.2"/>
<rect x="418.60" y="203.84" width="1.40" height="1.80" fill="#dfe8ee" rx="0.2" opacity=".8"/>
<text x="421.60" y="205.44" font-size="2.0" fill="#e0e8ee" font-weight="normal" font-family='"Liberation Sans",sans-serif' textLength="11.55" lengthAdjust="spacingAndGlyphs" >Menuiseries</text>
<rect x="416.00" y="206.80" width="1.60" height="1.80" fill="#e8eef2" rx="0.2"/>
<rect x="418.60" y="206.80" width="1.40" height="1.80" fill="#dfe8ee" rx="0.2" opacity=".8"/>
<text x="421.60" y="208.40" font-size="2.0" fill="#e0e8ee" font-weight="normal" font-family='"Liberation Sans",sans-serif' textLength="8.40" lengthAdjust="spacingAndGlyphs" >Mobilier</text>
<rect x="416.00" y="209.76" width="1.60" height="1.80" fill="#e8eef2" rx="0.2"/>
<rect x="418.60" y="209.76" width="1.40" height="1.80" fill="#dfe8ee" rx="0.2" opacity=".8"/>
<text x="421.60" y="211.36" font-size="2.0" fill="#e0e8ee" font-weight="normal" font-family='"Liberation Sans",sans-serif' textLength="13.65" lengthAdjust="spacingAndGlyphs" >Murs-existant</text>
<rect x="445.00" y="209.86" width="1.60" height="1.60" fill="#e8eef2" rx="0.2"/>
<rect x="416.00" y="212.72" width="1.60" height="1.80" fill="#e8eef2" rx="0.2"/>
<rect x="418.60" y="212.72" width="1.40" height="1.80" fill="#dfe8ee" rx="0.2" opacity=".8"/>
<text x="421.60" y="214.32" font-size="2.0" fill="#e0e8ee" font-weight="normal" font-family='"Liberation Sans",sans-serif' textLength="11.55" lengthAdjust="spacingAndGlyphs" >Murs-projet</text>
<rect x="414.20" y="215.08" width="34.60" height="3.00" fill="#8b9ba6"/>
<rect x="416.00" y="215.68" width="1.60" height="1.80" fill="#e8eef2" rx="0.2"/>
<rect x="418.60" y="215.68" width="1.40" height="1.80" fill="#dfe8ee" rx="0.2" opacity=".8"/>
<text x="421.60" y="217.28" font-size="2.0" fill="#e0e8ee" font-weight="normal" font-family='"Liberation Sans",sans-serif' textLength="5.25" lengthAdjust="spacingAndGlyphs" >Notes</text>
<rect x="445.00" y="215.78" width="1.60" height="1.60" fill="#e8eef2" rx="0.2"/>
<rect x="416.00" y="218.64" width="1.60" height="1.80" fill="#e8eef2" rx="0.2"/>
<rect x="418.60" y="218.64" width="1.40" height="1.80" fill="#dfe8ee" rx="0.2" opacity=".8"/>
<text x="421.60" y="220.24" font-size="2.0" fill="#e0e8ee" font-weight="normal" font-family='"Liberation Sans",sans-serif' textLength="3.15" lengthAdjust="spacingAndGlyphs" >Sol</text>
<rect x="445.00" y="218.74" width="1.60" height="1.60" fill="#e8eef2" rx="0.2"/>
<rect x="416.00" y="221.60" width="1.60" height="1.80" fill="#e8eef2" rx="0.2"/>
<rect x="418.60" y="221.60" width="1.40" height="1.80" fill="#dfe8ee" rx="0.2" opacity=".8"/>
<text x="421.60" y="223.20" font-size="2.0" fill="#e0e8ee" font-weight="normal" font-family='"Liberation Sans",sans-serif' textLength="16.80" lengthAdjust="spacingAndGlyphs" >Texte-annotation</text>
<rect x="416.00" y="224.56" width="1.60" height="1.80" fill="#e8eef2" rx="0.2"/>
<rect x="418.60" y="224.56" width="1.40" height="1.80" fill="#dfe8ee" rx="0.2" opacity=".8"/>
<text x="421.60" y="226.16" font-size="2.0" fill="#e0e8ee" font-weight="normal" font-family='"Liberation Sans",sans-serif' textLength="12.60" lengthAdjust="spacingAndGlyphs" >Texte-pieces</text>
<rect x="416.00" y="227.52" width="1.60" height="1.80" fill="#e8eef2" rx="0.2"/>
<rect x="418.60" y="227.52" width="1.40" height="1.80" fill="#dfe8ee" rx="0.2" opacity=".8"/>
<text x="421.60" y="229.12" font-size="2.0" fill="#e0e8ee" font-weight="normal" font-family='"Liberation Sans",sans-serif' textLength="14.70" lengthAdjust="spacingAndGlyphs" >Texte-surfaces</text>
<rect x="416.00" y="230.48" width="1.60" height="1.80" fill="#e8eef2" rx="0.2"/>
<rect x="418.60" y="230.48" width="1.40" height="1.80" fill="#dfe8ee" rx="0.2" opacity=".8"/>
<text x="421.60" y="232.08" font-size="2.0" fill="#e0e8ee" font-weight="normal" font-family='"Liberation Sans",sans-serif' textLength="10.50" lengthAdjust="spacingAndGlyphs" >Vegetation</text>
<rect x="414.20" y="269.00" width="34.60" height="103.00" fill="#36444f"/>
<text x="416.00" y="271.70" font-size="2.0" fill="#9fb0bb" font-weight="normal" font-family='"Liberation Sans",sans-serif' textLength="22.00" lengthAdjust="spacingAndGlyphs" >Selected layer: Notes</text>
<rect x="416.40" y="272.60" width="2.20" height="2.00" fill="#e0e8ee" rx="0.3"/>
<rect x="420.60" y="272.60" width="2.20" height="2.00" fill="#e0e8ee" rx="0.3"/>
<rect x="424.80" y="272.60" width="2.20" height="2.00" fill="#e0e8ee" rx="0.3"/>
<rect x="429.00" y="272.60" width="2.20" height="2.00" fill="#e0e8ee" rx="0.3"/>
<rect x="415.20" y="275.80" width="32.40" height="3.40" fill="#f2f5f7" rx="0.5"/>
<text x="417.00" y="278.20" font-size="2.0" fill="#7c8c98" font-weight="normal" font-family='"Liberation Sans",sans-serif' textLength="10.00" lengthAdjust="spacingAndGlyphs" >Search layers</text>
<rect x="414.20" y="280.20" width="34.60" height="4.20" fill="#3f4f5b"/>
<text x="415.60" y="283.21" font-size="2.6" fill="#e6ecf0" font-weight="normal" font-family='"Liberation Sans",sans-serif' textLength="10.40" lengthAdjust="spacingAndGlyphs" >Properties</text>
<rect x="436.00" y="281.20" width="2.20" height="2.20" fill="#dfe8ee" rx="0.3"/>
<rect x="440.40" y="281.20" width="2.20" height="2.20" fill="#dfe8ee" rx="0.3"/>
<rect x="444.60" y="281.20" width="2.20" height="2.20" fill="#dfe8ee" rx="0.3"/>
<text x="416.00" y="287.70" font-size="2.0" fill="#8ea0ac" font-weight="normal" font-family='"Liberation Sans",sans-serif' textLength="8.00" lengthAdjust="spacingAndGlyphs" >No selection</text>
<text x="425.60" y="292.30" font-size="2.0" fill="#b4c2cc" font-weight="normal" font-family='"Liberation Sans",sans-serif' textLength="5.00" lengthAdjust="spacingAndGlyphs" >Color</text>
<rect x="431.80" y="290.50" width="14.80" height="2.20" fill="#5e7180" rx="0.3"/>
<text x="432.60" y="292.27" font-size="1.9" fill="#eef2f5" font-weight="normal" font-family='"Liberation Sans",sans-serif' textLength="8.40" lengthAdjust="spacingAndGlyphs" >ByLayer</text>
<text x="425.60" y="295.67" font-size="2.0" fill="#b4c2cc" font-weight="normal" font-family='"Liberation Sans",sans-serif' textLength="5.00" lengthAdjust="spacingAndGlyphs" >Layer</text>
<rect x="431.80" y="293.87" width="14.80" height="2.20" fill="#506270" rx="0.3"/>
<text x="432.60" y="295.64" font-size="1.9" fill="#eef2f5" font-weight="normal" font-family='"Liberation Sans",sans-serif' textLength="8.40" lengthAdjust="spacingAndGlyphs" >ByLayer</text>
<text x="422.60" y="299.04" font-size="2.0" fill="#b4c2cc" font-weight="normal" font-family='"Liberation Sans",sans-serif' textLength="8.00" lengthAdjust="spacingAndGlyphs" >Linetype</text>
<rect x="431.80" y="297.24" width="14.80" height="2.20" fill="#506270" rx="0.3"/>
<text x="432.60" y="299.01" font-size="1.9" fill="#eef2f5" font-weight="normal" font-family='"Liberation Sans",sans-serif' textLength="8.40" lengthAdjust="spacingAndGlyphs" >ByLayer</text>
<text x="416.60" y="302.41" font-size="2.0" fill="#b4c2cc" font-weight="normal" font-family='"Liberation Sans",sans-serif' textLength="14.00" lengthAdjust="spacingAndGlyphs" >Linetype scale</text>
<rect x="431.80" y="300.61" width="14.80" height="2.20" fill="#5e7180" rx="0.3"/>
<text x="432.60" y="302.38" font-size="1.9" fill="#eef2f5" font-weight="normal" font-family='"Liberation Sans",sans-serif' textLength="8.40" lengthAdjust="spacingAndGlyphs" >ByLayer</text>
<text x="420.60" y="305.78" font-size="2.0" fill="#b4c2cc" font-weight="normal" font-family='"Liberation Sans",sans-serif' textLength="10.00" lengthAdjust="spacingAndGlyphs" >Lineweight</text>
<rect x="431.80" y="303.98" width="14.80" height="2.20" fill="#506270" rx="0.3"/>
<text x="432.60" y="305.75" font-size="1.9" fill="#eef2f5" font-weight="normal" font-family='"Liberation Sans",sans-serif' textLength="8.40" lengthAdjust="spacingAndGlyphs" >ByLayer</text>
<text x="418.60" y="309.15" font-size="2.0" fill="#b4c2cc" font-weight="normal" font-family='"Liberation Sans",sans-serif' textLength="12.00" lengthAdjust="spacingAndGlyphs" >Transparency</text>
<rect x="431.80" y="307.35" width="14.80" height="2.20" fill="#506270" rx="0.3"/>
<text x="432.60" y="309.12" font-size="1.9" fill="#eef2f5" font-weight="normal" font-family='"Liberation Sans",sans-serif' textLength="8.40" lengthAdjust="spacingAndGlyphs" >Standard</text>
<text x="420.60" y="312.52" font-size="2.0" fill="#b4c2cc" font-weight="normal" font-family='"Liberation Sans",sans-serif' textLength="10.00" lengthAdjust="spacingAndGlyphs" >Text style</text>
<rect x="431.80" y="310.72" width="14.80" height="2.20" fill="#5e7180" rx="0.3"/>
<text x="432.60" y="312.49" font-size="1.9" fill="#eef2f5" font-weight="normal" font-family='"Liberation Sans",sans-serif' textLength="8.40" lengthAdjust="spacingAndGlyphs" >Standard</text>
<text x="414.60" y="315.89" font-size="2.0" fill="#b4c2cc" font-weight="normal" font-family='"Liberation Sans",sans-serif' textLength="16.00" lengthAdjust="spacingAndGlyphs" >Dimension sty...</text>
<rect x="431.80" y="314.09" width="14.80" height="2.20" fill="#506270" rx="0.3"/>
<text x="432.60" y="315.86" font-size="1.9" fill="#eef2f5" font-weight="normal" font-family='"Liberation Sans",sans-serif' textLength="8.40" lengthAdjust="spacingAndGlyphs" >Standard</text>
<text x="414.60" y="319.26" font-size="2.0" fill="#b4c2cc" font-weight="normal" font-family='"Liberation Sans",sans-serif' textLength="16.00" lengthAdjust="spacingAndGlyphs" >Multileader s...</text>
<rect x="431.80" y="317.46" width="14.80" height="2.20" fill="#506270" rx="0.3"/>
<text x="432.60" y="319.23" font-size="1.9" fill="#eef2f5" font-weight="normal" font-family='"Liberation Sans",sans-serif' textLength="8.40" lengthAdjust="spacingAndGlyphs" >Standard</text>
<text x="419.60" y="322.63" font-size="2.0" fill="#b4c2cc" font-weight="normal" font-family='"Liberation Sans",sans-serif' textLength="11.00" lengthAdjust="spacingAndGlyphs" >Table style</text>
<rect x="431.80" y="320.83" width="14.80" height="2.20" fill="#5e7180" rx="0.3"/>
<text x="432.60" y="322.60" font-size="1.9" fill="#eef2f5" font-weight="normal" font-family='"Liberation Sans",sans-serif' textLength="8.40" lengthAdjust="spacingAndGlyphs" >Standard</text>
<text x="414.60" y="326.00" font-size="2.0" fill="#b4c2cc" font-weight="normal" font-family='"Liberation Sans",sans-serif' textLength="16.00" lengthAdjust="spacingAndGlyphs" >Annotative sc...</text>
<rect x="431.80" y="324.20" width="14.80" height="2.20" fill="#506270" rx="0.3"/>
<text x="432.60" y="325.97" font-size="1.9" fill="#eef2f5" font-weight="normal" font-family='"Liberation Sans",sans-serif' textLength="8.40" lengthAdjust="spacingAndGlyphs" >Standard</text>
<text x="419.60" y="329.37" font-size="2.0" fill="#b4c2cc" font-weight="normal" font-family='"Liberation Sans",sans-serif' textLength="11.00" lengthAdjust="spacingAndGlyphs" >Text height</text>
<rect x="431.80" y="327.57" width="14.80" height="2.20" fill="#506270" rx="0.3"/>
<text x="432.60" y="329.34" font-size="1.9" fill="#eef2f5" font-weight="normal" font-family='"Liberation Sans",sans-serif' textLength="8.40" lengthAdjust="spacingAndGlyphs" >Standard</text>
<text x="420.60" y="332.74" font-size="2.0" fill="#b4c2cc" font-weight="normal" font-family='"Liberation Sans",sans-serif' textLength="10.00" lengthAdjust="spacingAndGlyphs" >Plot style</text>
<rect x="431.80" y="330.94" width="14.80" height="2.20" fill="#5e7180" rx="0.3"/>
<text x="432.60" y="332.71" font-size="1.9" fill="#eef2f5" font-weight="normal" font-family='"Liberation Sans",sans-serif' textLength="8.40" lengthAdjust="spacingAndGlyphs" >Standard</text>
<text x="412.60" y="336.11" font-size="2.0" fill="#b4c2cc" font-weight="normal" font-family='"Liberation Sans",sans-serif' textLength="18.00" lengthAdjust="spacingAndGlyphs" >Plot style tabl...</text>
<text x="432.60" y="336.08" font-size="1.9" fill="#9fb0bb" font-weight="normal" font-family='"Liberation Sans",sans-serif' textLength="7.40" lengthAdjust="spacingAndGlyphs" >None</text>
<text x="413.60" y="339.48" font-size="2.0" fill="#b4c2cc" font-weight="normal" font-family='"Liberation Sans",sans-serif' textLength="17.00" lengthAdjust="spacingAndGlyphs" >Plot table att...</text>
<text x="432.60" y="339.45" font-size="1.9" fill="#9fb0bb" font-weight="normal" font-family='"Liberation Sans",sans-serif' textLength="7.40" lengthAdjust="spacingAndGlyphs" >None</text>
<text x="415.60" y="342.85" font-size="2.0" fill="#b4c2cc" font-weight="normal" font-family='"Liberation Sans",sans-serif' textLength="15.00" lengthAdjust="spacingAndGlyphs" >Plot table type</text>
<text x="432.60" y="342.82" font-size="1.9" fill="#9fb0bb" font-weight="normal" font-family='"Liberation Sans",sans-serif' textLength="7.40" lengthAdjust="spacingAndGlyphs" >Not available</text>
<rect x="165.60" y="366.60" width="283.20" height="5.40" fill="#3e4e59"/>
<rect x="194.00" y="367.20" width="7.60" height="4.20" fill="#6f8291"/>
<text x="194.80" y="370.13" font-size="2.1" fill="#f0f4f6" font-weight="normal" font-family='"Liberation Sans",sans-serif' textLength="5.80" lengthAdjust="spacingAndGlyphs" >Model</text>
<text x="203.40" y="370.13" font-size="2.1" fill="#a8b8c2" font-weight="normal" font-family='"Liberation Sans",sans-serif' textLength="8.60" lengthAdjust="spacingAndGlyphs" >Layout1</text>
<text x="214.60" y="370.13" font-size="2.1" fill="#a8b8c2" font-weight="normal" font-family='"Liberation Sans",sans-serif' textLength="8.40" lengthAdjust="spacingAndGlyphs" >Layout2</text>
<rect x="264.00" y="367.20" width="76.00" height="4.20" fill="#4b5c68"/>
<text x="266.00" y="370.13" font-size="2.1" fill="#9fb0bb" font-weight="normal" font-family='"Liberation Sans",sans-serif' textLength="18.00" lengthAdjust="spacingAndGlyphs" >Type a command</text>
<rect x="394.00" y="368.20" width="2.20" height="2.40" fill="#8fd0f0" rx="0.3" opacity=".9"/>
<rect x="397.60" y="368.20" width="2.20" height="2.40" fill="#8fd0f0" rx="0.3" opacity=".9"/>
<rect x="401.20" y="368.20" width="2.20" height="2.40" fill="#8fd0f0" rx="0.3" opacity=".9"/>
<rect x="404.80" y="368.20" width="2.20" height="2.40" fill="#dfe8ee" rx="0.3" opacity=".9"/>
<rect x="408.40" y="368.20" width="2.20" height="2.40" fill="#dfe8ee" rx="0.3" opacity=".9"/>
<rect x="412.00" y="368.20" width="2.20" height="2.40" fill="#8fd0f0" rx="0.3" opacity=".9"/>
<rect x="415.60" y="368.20" width="2.20" height="2.40" fill="#8fd0f0" rx="0.3" opacity=".9"/>
<rect x="419.20" y="368.20" width="2.20" height="2.40" fill="#dfe8ee" rx="0.3" opacity=".9"/>
<rect x="422.80" y="368.20" width="2.20" height="2.40" fill="#dfe8ee" rx="0.3" opacity=".9"/>
<rect x="426.40" y="368.20" width="2.20" height="2.40" fill="#dfe8ee" rx="0.3" opacity=".9"/>
<rect x="430.00" y="368.20" width="2.20" height="2.40" fill="#dfe8ee" rx="0.3" opacity=".9"/>
<rect x="433.60" y="368.20" width="2.20" height="2.40" fill="#dfe8ee" rx="0.3" opacity=".9"/>
<rect x="437.20" y="368.20" width="2.20" height="2.40" fill="#dfe8ee" rx="0.3" opacity=".9"/>
<rect x="440.80" y="368.20" width="2.20" height="2.40" fill="#dfe8ee" rx="0.3" opacity=".9"/>
<rect x="444.40" y="368.20" width="2.20" height="2.40" fill="#dfe8ee" rx="0.3" opacity=".9"/>
<text x="376.00" y="370.10" font-size="2.0" fill="#c6d2da" font-weight="normal" font-family='"Liberation Sans",sans-serif' textLength="15.00" lengthAdjust="spacingAndGlyphs" >1:1  ▾   1:100</text>
<line x1="228.00" y1="165.50" x2="228.00" y2="180.00" stroke="#8e9aa2" stroke-width="0.45" opacity="0.55"/>
<line x1="194.00" y1="180.00" x2="250.00" y2="180.00" stroke="#8e9aa2" stroke-width="0.45" opacity="0.4"/>
<line x1="247.60" y1="171.60" x2="383.80" y2="171.60" stroke="#8e9aa2" stroke-width="0.45" opacity="0.55"/>
<line x1="247.60" y1="171.60" x2="247.60" y2="363.60" stroke="#8e9aa2" stroke-width="0.45" opacity="0.55"/>
<line x1="383.80" y1="171.60" x2="383.80" y2="363.60" stroke="#8e9aa2" stroke-width="0.45" opacity="0.55"/>
<line x1="247.60" y1="363.60" x2="383.80" y2="363.60" stroke="#8e9aa2" stroke-width="0.45" opacity="0.55"/>
<line x1="251.00" y1="174.20" x2="380.00" y2="174.20" stroke="#8e9aa2" stroke-width="0.45" opacity="0.35"/>
<line x1="251.00" y1="174.20" x2="251.00" y2="340.00" stroke="#8e9aa2" stroke-width="0.45" opacity="0.3"/>
<line x1="194.00" y1="331.40" x2="414.00" y2="331.40" stroke="#8e9aa2" stroke-width="0.45" opacity="0.5"/>
<line x1="265.00" y1="180.00" x2="265.00" y2="330.00" stroke="#8e9aa2" stroke-width="0.45" opacity="0.25"/>
<line x1="262.00" y1="300.00" x2="262.00" y2="331.00" stroke="#8e9aa2" stroke-width="0.45" opacity="0.4"/>
<line x1="271.00" y1="311.00" x2="271.00" y2="331.00" stroke="#8e9aa2" stroke-width="0.45" opacity="0.4"/>
<path d="M367 172 C364 200 360 240 352 290 S342 330 330 345" fill="none" stroke="#9aa6ae" stroke-width="0.5" opacity="0.6" stroke-linecap="round"/>
<path d="M372 172 C369 205 365 245 358 292 S346 335 334 352" fill="none" stroke="#9aa6ae" stroke-width="0.5" opacity="0.45" stroke-linecap="round"/>
<path d="M296 333 C315 325 335 310 350 290" fill="none" stroke="#9aa6ae" stroke-width="0.5" opacity="0.5" stroke-linecap="round"/>
<path d="M262 333 C275 338 290 348 296 356" fill="none" stroke="#9aa6ae" stroke-width="0.5" opacity="0.5" stroke-linecap="round"/>
<path d="M262 346 C300 352 350 352 383 348" fill="none" stroke="#9aa6ae" stroke-width="0.5" opacity="0.5" stroke-linecap="round"/>
<path d="M255 352 C262 350 268 352 272 354 M262 349 v5 M286 350 v6" fill="none" stroke="#9aa6ae" stroke-width="0.5" opacity="0.7" stroke-linecap="round"/>
<path d="M288 355 l2 3 l2 -3 l2 3 l2 -3 l2 3 l2 -3 M315 354 c3 -2 5 2 2 4 M320 356 c2 -2 4 0 3 2" fill="none" stroke="#9aa6ae" stroke-width="0.5" opacity="0.7" stroke-linecap="round"/>
<path d="M268 192 l8 -6 M270 196 l10 -4 M285 204 l9 -8 M289 207 l12 -3" fill="none" stroke="#9aa6ae" stroke-width="0.5" opacity="0.7" stroke-linecap="round"/>
<path d="M329 190 c3 -4 6 2 9 -3 s5 -3 8 -1 M334 198 l10 -4" fill="none" stroke="#9aa6ae" stroke-width="0.5" opacity="0.7" stroke-linecap="round"/>
<path d="M262 195 c1 8 2 14 0 20 M352 188 c2 8 1 16 0 22" fill="none" stroke="#9aa6ae" stroke-width="0.5" opacity="0.5" stroke-linecap="round"/>
<path d="M310 222 c2 8 2 16 0 26 M314 224 c3 10 2 20 0 28" fill="none" stroke="#9aa6ae" stroke-width="0.5" opacity="0.5" stroke-linecap="round"/>
<path d="M322 250 c-4 10 -6 24 -2 40 M330 246 c4 12 4 30 -2 44" fill="none" stroke="#9aa6ae" stroke-width="0.5" opacity="0.45" stroke-linecap="round"/>
<path d="M338 268 c2 6 0 12 3 18 M346 262 c3 8 1 18 4 26 M356 256 c1 8 3 14 2 22" fill="none" stroke="#9aa6ae" stroke-width="0.5" opacity="0.55" stroke-linecap="round"/>
<path d="M262 240 c4 4 8 2 10 8 M280 270 c2 6 -1 12 2 18 M286 275 c2 6 0 10 1 16" fill="none" stroke="#9aa6ae" stroke-width="0.5" opacity="0.6" stroke-linecap="round"/>
<path d="M253 300 c2 6 0 14 2 20 M258 304 l1 10 M266 306 c1 4 0 8 1 12" fill="none" stroke="#9aa6ae" stroke-width="0.5" opacity="0.55" stroke-linecap="round"/>
<path d="M372 178 c2 -1 4 0 4 3 c0 3 -3 4 -2 7 c-3 -1 -4 -4 -3 -7 z" fill="#0e1418" stroke="#0e1418" stroke-width="0.8" opacity=".9"/>
<path d="M267.5 218 a8 8 0 0 1 8 -8 M287.5 218 a7 7 0 0 0 -7 -7 M323 219 a7 7 0 0 0 7 -7 v-2 M286 236 a7 7 0 0 1 -7 -7 M277.5 236 v8 a8 8 0 0 0 6 -8" fill="none" stroke="#c6d0d6" stroke-width="0.5" opacity="0.8" stroke-linecap="round"/>
<path d="M262 268 a6 6 0 0 0 6 -4 M281 264 a6 6 0 0 0 6 5" fill="none" stroke="#c6d0d6" stroke-width="0.5" opacity="0.7" stroke-linecap="round"/>
<rect x="257.00" y="178.40" width="108.80" height="3.40" fill="#f6f8f8"/>
<rect x="257.00" y="178.40" width="3.40" height="109.00" fill="#f6f8f8"/>
<path d="M362.4 178.4 L365.8 178.4 L359.2 221 L355.8 221 z" fill="#f6f8f8" stroke="none" stroke-width="0.6" />
<rect x="281.20" y="181.80" width="2.40" height="37.20" fill="#f6f8f8"/>
<rect x="320.20" y="181.80" width="2.80" height="37.20" fill="#f6f8f8"/>
<rect x="257.00" y="217.80" width="10.40" height="3.00" fill="#f6f8f8"/>
<rect x="276.20" y="217.80" width="11.40" height="3.00" fill="#f6f8f8"/>
<rect x="296.00" y="217.80" width="63.20" height="3.20" fill="#f6f8f8"/>
<rect x="296.60" y="217.80" width="3.40" height="92.80" fill="#f6f8f8"/>
<rect x="260.40" y="234.00" width="17.00" height="2.20" fill="#f6f8f8"/>
<rect x="286.00" y="234.00" width="11.00" height="2.20" fill="#f6f8f8"/>
<rect x="257.00" y="262.20" width="5.00" height="2.40" fill="#f6f8f8"/>
<rect x="268.00" y="262.20" width="13.00" height="2.40" fill="#f6f8f8"/>
<rect x="287.00" y="262.20" width="10.00" height="2.40" fill="#f6f8f8"/>
<rect x="272.60" y="264.60" width="3.20" height="46.00" fill="#f6f8f8"/>
<rect x="257.00" y="285.00" width="18.80" height="2.40" fill="#f6f8f8"/>
<rect x="272.60" y="307.40" width="27.40" height="3.20" fill="#f6f8f8"/>
<rect x="258.00" y="200.00" width="1.20" height="2.50" fill="#232e35" opacity=".6"/>
<rect x="259.00" y="246.00" width="1.20" height="2.50" fill="#232e35" opacity=".6"/>
<rect x="298.00" y="255.00" width="1.20" height="2.50" fill="#232e35" opacity=".6"/>
<rect x="298.00" y="280.00" width="1.20" height="2.50" fill="#232e35" opacity=".6"/>
<rect x="274.00" y="290.00" width="1.20" height="2.50" fill="#232e35" opacity=".6"/>
<path d="M290 179.2 l2 2 l2 -2 l2 2 l2 -2 l2 2 l2 -2 l2 2" fill="none" stroke="#111" stroke-width="0.8" />
<text x="311.00" y="180.81" font-size="2.9" fill="#ff4a32" font-weight="bold" font-family='"Liberation Sans",sans-serif' textLength="7.40" lengthAdjust="spacingAndGlyphs" stroke="#ff4a32" stroke-width="0.25">fenêtre</text>
<text x="262.00" y="194.01" font-size="2.9" fill="#ff4a32" font-weight="bold" font-family='"Liberation Sans",sans-serif' textLength="6.00" lengthAdjust="spacingAndGlyphs" stroke="#ff4a32" stroke-width="0.25">entrée</text>
<text x="300.00" y="212.21" font-size="2.9" fill="#ff4a32" font-weight="bold" font-family='"Liberation Sans",sans-serif' textLength="18.00" lengthAdjust="spacingAndGlyphs" stroke="#ff4a32" stroke-width="0.25">chambre parents</text>
<text x="334.40" y="209.61" font-size="2.9" fill="#ff4a32" font-weight="bold" font-family='"Liberation Sans",sans-serif' textLength="11.60" lengthAdjust="spacingAndGlyphs" stroke="#ff4a32" stroke-width="0.25">chambre</text>
<text x="334.40" y="213.61" font-size="2.9" fill="#ff4a32" font-weight="bold" font-family='"Liberation Sans",sans-serif' textLength="11.60" lengthAdjust="spacingAndGlyphs" stroke="#ff4a32" stroke-width="0.25">enfants 12 m²</text>
<text x="263.00" y="225.61" font-size="2.9" fill="#ff4a32" font-weight="bold" font-family='"Liberation Sans",sans-serif' textLength="13.00" lengthAdjust="spacingAndGlyphs" stroke="#ff4a32" stroke-width="0.25">salle de bain</text>
<text x="346.00" y="226.61" font-size="2.9" fill="#ff4a32" font-weight="bold" font-family='"Liberation Sans",sans-serif' textLength="6.40" lengthAdjust="spacingAndGlyphs" stroke="#ff4a32" stroke-width="0.25">jardin</text>
<text x="324.00" y="233.61" font-size="2.9" fill="#ff4a32" font-weight="bold" font-family='"Liberation Sans",sans-serif' textLength="8.00" lengthAdjust="spacingAndGlyphs" stroke="#ff4a32" stroke-width="0.25">terrasse</text>
<text x="324.00" y="236.61" font-size="2.9" fill="#ff4a32" font-weight="bold" font-family='"Liberation Sans",sans-serif' textLength="7.00" lengthAdjust="spacingAndGlyphs" stroke="#ff4a32" stroke-width="0.25">couverte</text>
<text x="338.00" y="244.81" font-size="2.9" fill="#ff4a32" font-weight="bold" font-family='"Liberation Sans",sans-serif' textLength="10.40" lengthAdjust="spacingAndGlyphs" stroke="#ff4a32" stroke-width="0.25">potager</text>
<text x="338.00" y="248.21" font-size="2.9" fill="#ff4a32" font-weight="bold" font-family='"Liberation Sans",sans-serif' textLength="10.00" lengthAdjust="spacingAndGlyphs" stroke="#ff4a32" stroke-width="0.25">et arbres</text>
<text x="338.00" y="251.61" font-size="2.9" fill="#ff4a32" font-weight="bold" font-family='"Liberation Sans",sans-serif' textLength="10.00" lengthAdjust="spacingAndGlyphs" stroke="#ff4a32" stroke-width="0.25">fruitiers</text>
<text x="287.00" y="243.61" font-size="2.9" fill="#ff4a32" font-weight="bold" font-family='"Liberation Sans",sans-serif' textLength="6.60" lengthAdjust="spacingAndGlyphs" stroke="#ff4a32" stroke-width="0.25">cuisine</text>
<text x="287.00" y="246.61" font-size="2.9" fill="#ff4a32" font-weight="bold" font-family='"Liberation Sans",sans-serif' textLength="5.00" lengthAdjust="spacingAndGlyphs" stroke="#ff4a32" stroke-width="0.25">12 m²</text>
<text x="249.40" y="261.81" font-size="2.9" fill="#ff4a32" font-weight="bold" font-family='"Liberation Sans",sans-serif' textLength="7.60" lengthAdjust="spacingAndGlyphs" stroke="#ff4a32" stroke-width="0.25">entrée</text>
<text x="317.00" y="275.01" font-size="2.9" fill="#ff4a32" font-weight="bold" font-family='"Liberation Sans",sans-serif' textLength="6.40" lengthAdjust="spacingAndGlyphs" stroke="#ff4a32" stroke-width="0.25">puits</text>
<text x="317.00" y="278.41" font-size="2.9" fill="#ff4a32" font-weight="bold" font-family='"Liberation Sans",sans-serif' textLength="6.00" lengthAdjust="spacingAndGlyphs" stroke="#ff4a32" stroke-width="0.25">ancien</text>
<text x="317.00" y="281.62" font-size="2.9" fill="#ff4a32" font-weight="bold" font-family='"Liberation Sans",sans-serif' textLength="5.00" lengthAdjust="spacingAndGlyphs" stroke="#ff4a32" stroke-width="0.25">5 m</text>
<text x="262.40" y="318.41" font-size="2.9" fill="#ff4a32" font-weight="bold" font-family='"Liberation Sans",sans-serif' textLength="8.60" lengthAdjust="spacingAndGlyphs" stroke="#ff4a32" stroke-width="0.25">garage</text>
<text x="280.60" y="313.62" font-size="2.9" fill="#ff4a32" font-weight="bold" font-family='"Liberation Sans",sans-serif' textLength="5.80" lengthAdjust="spacingAndGlyphs" stroke="#ff4a32" stroke-width="0.25">salon</text>
<text x="280.60" y="316.81" font-size="2.9" fill="#ff4a32" font-weight="bold" font-family='"Liberation Sans",sans-serif' textLength="5.00" lengthAdjust="spacingAndGlyphs" stroke="#ff4a32" stroke-width="0.25">séjour</text>
<text x="280.60" y="320.01" font-size="2.9" fill="#ff4a32" font-weight="bold" font-family='"Liberation Sans",sans-serif' textLength="4.40" lengthAdjust="spacingAndGlyphs" stroke="#ff4a32" stroke-width="0.25">24 m²</text>
<text x="297.00" y="342.62" font-size="2.9" fill="#ff4a32" font-weight="bold" font-family='"Liberation Sans",sans-serif' textLength="23.40" lengthAdjust="spacingAndGlyphs" stroke="#ff4a32" stroke-width="0.25">chemin vers la route</text>
<text x="272.00" y="360.62" font-size="2.9" fill="#ff4a32" font-weight="bold" font-family='"Liberation Sans",sans-serif' textLength="11.40" lengthAdjust="spacingAndGlyphs" stroke="#ff4a32" stroke-width="0.25">portail</text>
<line x1="378.80" y1="228.00" x2="378.80" y2="238.00" stroke="#dfe6ea" stroke-width="0.5" />
<line x1="374.00" y1="233.00" x2="383.60" y2="233.00" stroke="#dfe6ea" stroke-width="0.5" />
<path d="M367.4 240 v6.6 h5.6" fill="none" stroke="#c6d0d6" stroke-width="0.5" opacity="0.8" stroke-linecap="round"/>
</g>
<text x="467.40" y="343.81" font-size="6.9" fill="#2c4a66" font-weight="normal" font-family='"Liberation Serif",serif' textLength="75.00" lengthAdjust="spacingAndGlyphs" stroke="#2c4a66" stroke-width="0.18">Digital floorplan based on</text>
<text x="473.60" y="352.92" font-size="6.9" fill="#2c4a66" font-weight="normal" font-family='"Liberation Serif",serif' textLength="61.40" lengthAdjust="spacingAndGlyphs" stroke="#2c4a66" stroke-width="0.18">my mother’s drawing,</text>
<text x="498.20" y="361.42" font-size="6.9" fill="#2c4a66" font-weight="normal" font-family='"Liberation Serif",serif' textLength="13.60" lengthAdjust="spacingAndGlyphs" stroke="#2c4a66" stroke-width="0.18">2025</text>
</g>
<g clip-path="url(#ccam)">
<linearGradient id="gwall" x1="0" x2="1" y1="0" y2="0"><stop offset="0" stop-color="#c8ccb8"/><stop offset="0.55" stop-color="#bfc4ac"/><stop offset="1" stop-color="#d4d8c4"/></linearGradient>
<rect x="604.00" y="194.00" width="196.00" height="112.00" fill="url(#gwall)"/>
<g filter="url(#b1)">
<path d="M716 190 L804 190 L804 204 L742 232 L722 240 z" fill="#c3c8b0" stroke="none" stroke-width="0.6" />
<path d="M742 230 L804 198 L804 310 L744 310 z" fill="#b9bea2" stroke="none" stroke-width="0.6" />
<path d="M756 226 L804 200 L804 310 L760 310 z" fill="#f4f5ee" stroke="none" stroke-width="0.6" />
<path d="M744 234 L757 226 L758 310 L746 310 z" fill="#b3b898" stroke="none" stroke-width="0.6" />
<path d="M736 231 L776 192 L786 192 L742 236 z" fill="#dadfcb" stroke="none" stroke-width="0.6" />
<path d="M742 236 L804 203 L804 209 L744 241 z" fill="#e9ecdf" stroke="none" stroke-width="0.6" />
<path d="M779.4 219 L788.4 216 L792.6 310 L782.6 310 z" fill="#b9aa86" stroke="none" stroke-width="0.6" />
<path d="M782.4 222 L785.4 221 L788.6 310 L785.2 310 z" fill="#a28e68" stroke="none" stroke-width="0.6" />
<path d="M792 214 L804 209 L804 310 L796 310 z" fill="#fbfbf6" stroke="none" stroke-width="0.6" />
</g>
<g filter="url(#b06)">
<path d="M604 190 L614.6 190 L612 222 L608 250 L604 262 z" fill="#1b1d19" stroke="none" stroke-width="0.6" />
<rect x="640.60" y="194.00" width="4.80" height="90.00" fill="#d3d7c4" opacity=".9"/>
<rect x="646.00" y="194.00" width="2.00" height="56.00" fill="#aeb39c" opacity=".7"/>
<path d="M650 214 C656 204 662 198 668 194 L672 194 L674 252 L648 262 z" fill="#2a371c" stroke="none" stroke-width="0.6" />
<path d="M612 236 C620 226 632 224 640 230 C648 226 656 232 660 244 L664 310 L604 310 L604 266 z" fill="#28331b" stroke="none" stroke-width="0.6" />
<path d="M606 216 C612 210 620 212 624 220 C630 226 626 236 616 240 C610 240 606 232 606 216 z" fill="#27331b" stroke="none" stroke-width="0.6" />
<path d="M-4.4 0 Q0 -2.8 4.4 0 Q0 2.8 -4.4 0 z" fill="#3a4a24" opacity="1" transform="translate(635.0 257.6) rotate(-32)"/>
<path d="M-3.3 0 Q0 -2.0 3.3 0 Q0 2.0 -3.3 0 z" fill="#4d6030" opacity="1" transform="translate(617.8 252.3) rotate(-57)"/>
<path d="M-5.9 0 Q0 -2.5 5.9 0 Q0 2.5 -5.9 0 z" fill="#3a4a24" opacity="1" transform="translate(640.5 293.9) rotate(77)"/>
<path d="M-3.2 0 Q0 -1.9 3.2 0 Q0 1.9 -3.2 0 z" fill="#42532a" opacity="1" transform="translate(647.6 264.5) rotate(-19)"/>
<path d="M-4.6 0 Q0 -2.5 4.6 0 Q0 2.5 -4.6 0 z" fill="#26331a" opacity="1" transform="translate(644.4 281.6) rotate(47)"/>
<path d="M-5.1 0 Q0 -2.0 5.1 0 Q0 2.0 -5.1 0 z" fill="#1c2712" opacity="1" transform="translate(606.3 205.3) rotate(-22)"/>
<path d="M-5.5 0 Q0 -2.1 5.5 0 Q0 2.1 -5.5 0 z" fill="#1c2712" opacity="1" transform="translate(638.8 199.3) rotate(-76)"/>
<path d="M-4.4 0 Q0 -3.0 4.4 0 Q0 3.0 -4.4 0 z" fill="#1c2712" opacity="1" transform="translate(660.2 196.1) rotate(21)"/>
<path d="M-4.0 0 Q0 -2.0 4.0 0 Q0 2.0 -4.0 0 z" fill="#30401f" opacity="1" transform="translate(632.9 258.3) rotate(-77)"/>
<path d="M-4.3 0 Q0 -1.9 4.3 0 Q0 1.9 -4.3 0 z" fill="#26331a" opacity="1" transform="translate(609.8 283.7) rotate(-47)"/>
<path d="M-3.0 0 Q0 -2.8 3.0 0 Q0 2.8 -3.0 0 z" fill="#26331a" opacity="1" transform="translate(632.8 238.2) rotate(71)"/>
<path d="M-6.0 0 Q0 -2.4 6.0 0 Q0 2.4 -6.0 0 z" fill="#182010" opacity="1" transform="translate(625.5 293.3) rotate(67)"/>
<path d="M-3.0 0 Q0 -2.5 3.0 0 Q0 2.5 -3.0 0 z" fill="#30401f" opacity="1" transform="translate(612.4 304.8) rotate(-5)"/>
<path d="M-3.4 0 Q0 -2.4 3.4 0 Q0 2.4 -3.4 0 z" fill="#182010" opacity="1" transform="translate(646.7 197.7) rotate(67)"/>
<path d="M-5.7 0 Q0 -2.7 5.7 0 Q0 2.7 -5.7 0 z" fill="#5a6c3a" opacity="1" transform="translate(614.7 238.5) rotate(-17)"/>
<path d="M-5.1 0 Q0 -2.1 5.1 0 Q0 2.1 -5.1 0 z" fill="#4d6030" opacity="1" transform="translate(652.4 213.4) rotate(43)"/>
<path d="M-4.5 0 Q0 -2.0 4.5 0 Q0 2.0 -4.5 0 z" fill="#1c2712" opacity="1" transform="translate(644.6 242.4) rotate(20)"/>
<path d="M-4.6 0 Q0 -2.9 4.6 0 Q0 2.9 -4.6 0 z" fill="#5a6c3a" opacity="1" transform="translate(622.4 286.6) rotate(-63)"/>
<path d="M-3.8 0 Q0 -2.9 3.8 0 Q0 2.9 -3.8 0 z" fill="#42532a" opacity="1" transform="translate(614.1 248.7) rotate(-28)"/>
<path d="M-3.2 0 Q0 -1.8 3.2 0 Q0 1.8 -3.2 0 z" fill="#26331a" opacity="1" transform="translate(653.9 203.6) rotate(14)"/>
<path d="M-5.7 0 Q0 -3.0 5.7 0 Q0 3.0 -5.7 0 z" fill="#26331a" opacity="1" transform="translate(640.0 303.0) rotate(53)"/>
<path d="M-4.4 0 Q0 -2.1 4.4 0 Q0 2.1 -4.4 0 z" fill="#1c2712" opacity="1" transform="translate(643.4 211.4) rotate(-1)"/>
<path d="M-3.2 0 Q0 -2.0 3.2 0 Q0 2.0 -3.2 0 z" fill="#3a4a24" opacity="1" transform="translate(667.6 198.3) rotate(-46)"/>
<path d="M-5.7 0 Q0 -2.6 5.7 0 Q0 2.6 -5.7 0 z" fill="#42532a" opacity="1" transform="translate(670.0 204.3) rotate(-47)"/>
<path d="M-5.8 0 Q0 -1.6 5.8 0 Q0 1.6 -5.8 0 z" fill="#3a4a24" opacity="1" transform="translate(628.5 271.4) rotate(47)"/>
<path d="M-4.8 0 Q0 -1.7 4.8 0 Q0 1.7 -4.8 0 z" fill="#1c2712" opacity="1" transform="translate(642.7 264.7) rotate(-51)"/>
<path d="M-4.3 0 Q0 -2.8 4.3 0 Q0 2.8 -4.3 0 z" fill="#3a4a24" opacity="1" transform="translate(652.6 238.7) rotate(-59)"/>
<path d="M-4.4 0 Q0 -1.9 4.4 0 Q0 1.9 -4.4 0 z" fill="#1c2712" opacity="1" transform="translate(639.2 252.6) rotate(-52)"/>
<path d="M-5.7 0 Q0 -2.1 5.7 0 Q0 2.1 -5.7 0 z" fill="#5a6c3a" opacity="1" transform="translate(637.8 263.6) rotate(-44)"/>
<path d="M-5.0 0 Q0 -2.2 5.0 0 Q0 2.2 -5.0 0 z" fill="#30401f" opacity="1" transform="translate(649.4 218.3) rotate(-19)"/>
<path d="M-5.4 0 Q0 -2.7 5.4 0 Q0 2.7 -5.4 0 z" fill="#182010" opacity="1" transform="translate(626.9 269.2) rotate(-29)"/>
<path d="M-3.6 0 Q0 -1.8 3.6 0 Q0 1.8 -3.6 0 z" fill="#5a6c3a" opacity="1" transform="translate(662.3 238.3) rotate(9)"/>
<path d="M-3.3 0 Q0 -2.3 3.3 0 Q0 2.3 -3.3 0 z" fill="#26331a" opacity="1" transform="translate(651.5 300.5) rotate(-26)"/>
<path d="M-5.1 0 Q0 -2.8 5.1 0 Q0 2.8 -5.1 0 z" fill="#5a6c3a" opacity="1" transform="translate(659.2 238.1) rotate(79)"/>
<path d="M-3.9 0 Q0 -2.7 3.9 0 Q0 2.7 -3.9 0 z" fill="#5a6c3a" opacity="1" transform="translate(661.9 200.6) rotate(-76)"/>
<path d="M-3.7 0 Q0 -1.8 3.7 0 Q0 1.8 -3.7 0 z" fill="#30401f" opacity="1" transform="translate(647.0 240.6) rotate(-68)"/>
<path d="M-5.9 0 Q0 -2.6 5.9 0 Q0 2.6 -5.9 0 z" fill="#30401f" opacity="1" transform="translate(669.0 208.7) rotate(-29)"/>
<path d="M-4.6 0 Q0 -1.7 4.6 0 Q0 1.7 -4.6 0 z" fill="#3a4a24" opacity="1" transform="translate(658.7 224.2) rotate(-23)"/>
<path d="M-4.2 0 Q0 -2.7 4.2 0 Q0 2.7 -4.2 0 z" fill="#4d6030" opacity="1" transform="translate(623.4 234.0) rotate(-23)"/>
<path d="M-4.4 0 Q0 -1.9 4.4 0 Q0 1.9 -4.4 0 z" fill="#4d6030" opacity="1" transform="translate(611.6 298.6) rotate(-79)"/>
<path d="M-4.4 0 Q0 -2.5 4.4 0 Q0 2.5 -4.4 0 z" fill="#5a6c3a" opacity="1" transform="translate(630.1 258.6) rotate(-28)"/>
<path d="M-3.6 0 Q0 -2.9 3.6 0 Q0 2.9 -3.6 0 z" fill="#42532a" opacity="1" transform="translate(612.3 291.3) rotate(-58)"/>
<path d="M-4.0 0 Q0 -1.7 4.0 0 Q0 1.7 -4.0 0 z" fill="#42532a" opacity="1" transform="translate(656.6 231.2) rotate(32)"/>
<path d="M-3.7 0 Q0 -2.8 3.7 0 Q0 2.8 -3.7 0 z" fill="#1c2712" opacity="1" transform="translate(627.9 242.4) rotate(29)"/>
<path d="M-4.4 0 Q0 -3.0 4.4 0 Q0 3.0 -4.4 0 z" fill="#26331a" opacity="1" transform="translate(657.2 215.0) rotate(52)"/>
<path d="M-5.5 0 Q0 -2.4 5.5 0 Q0 2.4 -5.5 0 z" fill="#30401f" opacity="1" transform="translate(666.7 205.5) rotate(-38)"/>
<path d="M-5.0 0 Q0 -2.9 5.0 0 Q0 2.9 -5.0 0 z" fill="#5a6c3a" opacity="1" transform="translate(639.5 288.8) rotate(76)"/>
<path d="M-4.7 0 Q0 -1.9 4.7 0 Q0 1.9 -4.7 0 z" fill="#5a6c3a" opacity="1" transform="translate(619.3 289.6) rotate(57)"/>
<path d="M-4.5 0 Q0 -2.2 4.5 0 Q0 2.2 -4.5 0 z" fill="#42532a" opacity="1" transform="translate(613.3 196.5) rotate(64)"/>
<path d="M-3.8 0 Q0 -2.3 3.8 0 Q0 2.3 -3.8 0 z" fill="#3a4a24" opacity="1" transform="translate(665.6 246.5) rotate(-48)"/>
<path d="M-4.6 0 Q0 -1.8 4.6 0 Q0 1.8 -4.6 0 z" fill="#3a4a24" opacity="1" transform="translate(627.7 295.1) rotate(27)"/>
<path d="M-3.1 0 Q0 -1.8 3.1 0 Q0 1.8 -3.1 0 z" fill="#1c2712" opacity="1" transform="translate(645.5 297.8) rotate(-77)"/>
<path d="M-3.3 0 Q0 -2.6 3.3 0 Q0 2.6 -3.3 0 z" fill="#182010" opacity="1" transform="translate(650.0 231.4) rotate(-49)"/>
<path d="M-4.1 0 Q0 -2.2 4.1 0 Q0 2.2 -4.1 0 z" fill="#42532a" opacity="1" transform="translate(651.9 273.2) rotate(55)"/>
<path d="M-4.6 0 Q0 -2.8 4.6 0 Q0 2.8 -4.6 0 z" fill="#4d6030" opacity="1" transform="translate(645.4 255.2) rotate(76)"/>
<path d="M-5.7 0 Q0 -2.0 5.7 0 Q0 2.0 -5.7 0 z" fill="#5a6c3a" opacity="1" transform="translate(643.5 211.0) rotate(0)"/>
<path d="M-5.7 0 Q0 -1.8 5.7 0 Q0 1.8 -5.7 0 z" fill="#4d6030" opacity="1" transform="translate(663.0 217.4) rotate(-19)"/>
<path d="M-4.6 0 Q0 -2.6 4.6 0 Q0 2.6 -4.6 0 z" fill="#3a4a24" opacity="1" transform="translate(614.5 205.7) rotate(-29)"/>
<path d="M-4.7 0 Q0 -2.1 4.7 0 Q0 2.1 -4.7 0 z" fill="#26331a" opacity="1" transform="translate(631.8 271.4) rotate(12)"/>
<path d="M-5.4 0 Q0 -2.3 5.4 0 Q0 2.3 -5.4 0 z" fill="#4d6030" opacity="1" transform="translate(613.4 251.6) rotate(-74)"/>
<path d="M-3.4 0 Q0 -1.9 3.4 0 Q0 1.9 -3.4 0 z" fill="#3a4a24" opacity="1" transform="translate(608.4 256.7) rotate(-28)"/>
<path d="M-3.2 0 Q0 -1.7 3.2 0 Q0 1.7 -3.2 0 z" fill="#182010" opacity="1" transform="translate(649.1 259.8) rotate(20)"/>
<path d="M-3.0 0 Q0 -2.6 3.0 0 Q0 2.6 -3.0 0 z" fill="#5a6c3a" opacity="1" transform="translate(635.9 252.7) rotate(-29)"/>
<path d="M-5.8 0 Q0 -2.4 5.8 0 Q0 2.4 -5.8 0 z" fill="#3a4a24" opacity="1" transform="translate(617.6 245.9) rotate(-56)"/>
<path d="M-4.7 0 Q0 -1.9 4.7 0 Q0 1.9 -4.7 0 z" fill="#3a4a24" opacity="1" transform="translate(638.8 197.7) rotate(69)"/>
<path d="M-5.4 0 Q0 -2.2 5.4 0 Q0 2.2 -5.4 0 z" fill="#4d6030" opacity="1" transform="translate(622.5 296.2) rotate(4)"/>
<path d="M-3.9 0 Q0 -1.7 3.9 0 Q0 1.7 -3.9 0 z" fill="#30401f" opacity="1" transform="translate(632.0 275.5) rotate(11)"/>
<path d="M-4.0 0 Q0 -2.5 4.0 0 Q0 2.5 -4.0 0 z" fill="#5a6c3a" opacity="1" transform="translate(609.2 226.0) rotate(65)"/>
<path d="M-5.1 0 Q0 -2.7 5.1 0 Q0 2.7 -5.1 0 z" fill="#4d6030" opacity="1" transform="translate(617.6 204.5) rotate(67)"/>
<path d="M-4.3 0 Q0 -2.3 4.3 0 Q0 2.3 -4.3 0 z" fill="#5a6c3a" opacity="1" transform="translate(607.5 263.7) rotate(-30)"/>
<path d="M-5.7 0 Q0 -2.4 5.7 0 Q0 2.4 -5.7 0 z" fill="#30401f" opacity="1" transform="translate(647.5 197.2) rotate(50)"/>
<path d="M-4.9 0 Q0 -2.7 4.9 0 Q0 2.7 -4.9 0 z" fill="#42532a" opacity="1" transform="translate(632.6 253.3) rotate(-61)"/>
<path d="M-5.8 0 Q0 -1.8 5.8 0 Q0 1.8 -5.8 0 z" fill="#3a4a24" opacity="1" transform="translate(641.2 269.5) rotate(40)"/>
<path d="M-4.3 0 Q0 -2.3 4.3 0 Q0 2.3 -4.3 0 z" fill="#3a4a24" opacity="1" transform="translate(640.7 261.6) rotate(73)"/>
<path d="M-4.7 0 Q0 -2.0 4.7 0 Q0 2.0 -4.7 0 z" fill="#5a6c3a" opacity="1" transform="translate(626.0 254.3) rotate(-5)"/>
<path d="M-4.2 0 Q0 -2.6 4.2 0 Q0 2.6 -4.2 0 z" fill="#4d6030" opacity="1" transform="translate(607.7 281.0) rotate(-67)"/>
<path d="M-5.4 0 Q0 -1.9 5.4 0 Q0 1.9 -5.4 0 z" fill="#42532a" opacity="1" transform="translate(609.2 304.8) rotate(42)"/>
<path d="M-5.8 0 Q0 -2.6 5.8 0 Q0 2.6 -5.8 0 z" fill="#1c2712" opacity="1" transform="translate(622.1 279.1) rotate(39)"/>
<path d="M-3.2 0 Q0 -2.2 3.2 0 Q0 2.2 -3.2 0 z" fill="#1c2712" opacity="1" transform="translate(615.2 301.6) rotate(-50)"/>
<path d="M-3.4 0 Q0 -2.2 3.4 0 Q0 2.2 -3.4 0 z" fill="#182010" opacity="1" transform="translate(619.0 201.7) rotate(73)"/>
<path d="M-5.9 0 Q0 -2.6 5.9 0 Q0 2.6 -5.9 0 z" fill="#26331a" opacity="1" transform="translate(622.8 260.0) rotate(-19)"/>
<path d="M-3.8 0 Q0 -2.5 3.8 0 Q0 2.5 -3.8 0 z" fill="#30401f" opacity="1" transform="translate(636.8 251.3) rotate(64)"/>
<path d="M-3.6 0 Q0 -1.9 3.6 0 Q0 1.9 -3.6 0 z" fill="#26331a" opacity="1" transform="translate(650.7 216.9) rotate(-30)"/>
<path d="M-3.8 0 Q0 -1.6 3.8 0 Q0 1.6 -3.8 0 z" fill="#30401f" opacity="1" transform="translate(662.2 200.3) rotate(-71)"/>
<path d="M-5.7 0 Q0 -1.8 5.7 0 Q0 1.8 -5.7 0 z" fill="#1c2712" opacity="1" transform="translate(612.6 255.6) rotate(-20)"/>
<path d="M-4.0 0 Q0 -2.3 4.0 0 Q0 2.3 -4.0 0 z" fill="#4d6030" opacity="1" transform="translate(646.4 237.1) rotate(-46)"/>
<path d="M-4.3 0 Q0 -2.6 4.3 0 Q0 2.6 -4.3 0 z" fill="#26331a" opacity="1" transform="translate(659.7 204.2) rotate(19)"/>
<path d="M-3.9 0 Q0 -2.7 3.9 0 Q0 2.7 -3.9 0 z" fill="#5a6c3a" opacity="1" transform="translate(657.8 236.6) rotate(-33)"/>
<path d="M-3.2 0 Q0 -1.7 3.2 0 Q0 1.7 -3.2 0 z" fill="#30401f" opacity="1" transform="translate(633.4 236.6) rotate(64)"/>
<path d="M-3.2 0 Q0 -1.9 3.2 0 Q0 1.9 -3.2 0 z" fill="#42532a" opacity="1" transform="translate(642.3 285.7) rotate(74)"/>
<path d="M-3.8 0 Q0 -1.8 3.8 0 Q0 1.8 -3.8 0 z" fill="#5a6c3a" opacity="1" transform="translate(611.2 229.4) rotate(11)"/>
<path d="M-5.1 0 Q0 -2.4 5.1 0 Q0 2.4 -5.1 0 z" fill="#5a6c3a" opacity="1" transform="translate(648.1 232.0) rotate(-9)"/>
<path d="M-3.7 0 Q0 -3.0 3.7 0 Q0 3.0 -3.7 0 z" fill="#30401f" opacity="1" transform="translate(634.0 284.3) rotate(52)"/>
<path d="M-5.0 0 Q0 -2.4 5.0 0 Q0 2.4 -5.0 0 z" fill="#30401f" opacity="1" transform="translate(621.9 235.8) rotate(-31)"/>
<path d="M-5.5 0 Q0 -2.4 5.5 0 Q0 2.4 -5.5 0 z" fill="#26331a" opacity="1" transform="translate(653.3 236.5) rotate(-35)"/>
<path d="M-3.7 0 Q0 -1.7 3.7 0 Q0 1.7 -3.7 0 z" fill="#42532a" opacity="1" transform="translate(611.7 246.0) rotate(-40)"/>
<path d="M-3.2 0 Q0 -2.4 3.2 0 Q0 2.4 -3.2 0 z" fill="#3a4a24" opacity="1" transform="translate(642.3 302.3) rotate(59)"/>
<path d="M-3.1 0 Q0 -2.5 3.1 0 Q0 2.5 -3.1 0 z" fill="#42532a" opacity="1" transform="translate(611.4 205.0) rotate(-56)"/>
<path d="M-4.2 0 Q0 -2.1 4.2 0 Q0 2.1 -4.2 0 z" fill="#3a4a24" opacity="1" transform="translate(621.7 220.2) rotate(5)"/>
<path d="M-5.1 0 Q0 -2.9 5.1 0 Q0 2.9 -5.1 0 z" fill="#42532a" opacity="1" transform="translate(649.0 250.3) rotate(25)"/>
<path d="M-5.9 0 Q0 -2.5 5.9 0 Q0 2.5 -5.9 0 z" fill="#182010" opacity="1" transform="translate(628.3 196.4) rotate(54)"/>
<path d="M-3.6 0 Q0 -2.2 3.6 0 Q0 2.2 -3.6 0 z" fill="#5a6c3a" opacity="1" transform="translate(621.7 213.8) rotate(-6)"/>
<path d="M-3.9 0 Q0 -1.8 3.9 0 Q0 1.8 -3.9 0 z" fill="#42532a" opacity="1" transform="translate(623.5 293.5) rotate(-35)"/>
<path d="M-3.3 0 Q0 -1.9 3.3 0 Q0 1.9 -3.3 0 z" fill="#5a6c3a" opacity="1" transform="translate(607.1 248.9) rotate(-25)"/>
<path d="M-4.3 0 Q0 -2.9 4.3 0 Q0 2.9 -4.3 0 z" fill="#4d6030" opacity="1" transform="translate(643.7 262.0) rotate(23)"/>
<path d="M-5.6 0 Q0 -2.3 5.6 0 Q0 2.3 -5.6 0 z" fill="#182010" opacity="1" transform="translate(617.0 279.3) rotate(23)"/>
<path d="M-4.4 0 Q0 -1.9 4.4 0 Q0 1.9 -4.4 0 z" fill="#42532a" opacity="1" transform="translate(664.5 233.6) rotate(-68)"/>
<path d="M-5.4 0 Q0 -1.7 5.4 0 Q0 1.7 -5.4 0 z" fill="#5a6c3a" opacity="1" transform="translate(619.9 210.8) rotate(-20)"/>
<path d="M-4.8 0 Q0 -1.8 4.8 0 Q0 1.8 -4.8 0 z" fill="#182010" opacity="1" transform="translate(663.9 245.5) rotate(-40)"/>
<path d="M-4.9 0 Q0 -3.0 4.9 0 Q0 3.0 -4.9 0 z" fill="#4d6030" opacity="1" transform="translate(655.4 211.9) rotate(-12)"/>
<path d="M-5.5 0 Q0 -2.8 5.5 0 Q0 2.8 -5.5 0 z" fill="#26331a" opacity="1" transform="translate(639.0 201.8) rotate(-48)"/>
<path d="M-5.1 0 Q0 -1.7 5.1 0 Q0 1.7 -5.1 0 z" fill="#182010" opacity="1" transform="translate(611.3 225.7) rotate(70)"/>
<path d="M-4.3 0 Q0 -2.9 4.3 0 Q0 2.9 -4.3 0 z" fill="#26331a" opacity="1" transform="translate(640.8 251.7) rotate(-57)"/>
<path d="M-4.6 0 Q0 -1.8 4.6 0 Q0 1.8 -4.6 0 z" fill="#182010" opacity="1" transform="translate(656.0 244.4) rotate(-1)"/>
<path d="M-5.0 0 Q0 -1.7 5.0 0 Q0 1.7 -5.0 0 z" fill="#3a4a24" opacity="1" transform="translate(626.2 240.6) rotate(-61)"/>
<path d="M-5.2 0 Q0 -2.7 5.2 0 Q0 2.7 -5.2 0 z" fill="#182010" opacity="1" transform="translate(650.0 207.6) rotate(-49)"/>
<path d="M-3.7 0 Q0 -2.4 3.7 0 Q0 2.4 -3.7 0 z" fill="#182010" opacity="1" transform="translate(647.9 197.4) rotate(37)"/>
<path d="M-5.9 0 Q0 -2.7 5.9 0 Q0 2.7 -5.9 0 z" fill="#5a6c3a" opacity="1" transform="translate(663.7 212.7) rotate(62)"/>
<path d="M-4.0 0 Q0 -2.9 4.0 0 Q0 2.9 -4.0 0 z" fill="#1c2712" opacity="1" transform="translate(648.7 224.2) rotate(64)"/>
<path d="M-3.3 0 Q0 -1.8 3.3 0 Q0 1.8 -3.3 0 z" fill="#3a4a24" opacity="1" transform="translate(636.1 266.4) rotate(-56)"/>
<path d="M-4.2 0 Q0 -2.8 4.2 0 Q0 2.8 -4.2 0 z" fill="#26331a" opacity="1" transform="translate(614.4 265.3) rotate(71)"/>
<path d="M-4.3 0 Q0 -2.7 4.3 0 Q0 2.7 -4.3 0 z" fill="#1c2712" opacity="1" transform="translate(651.1 207.0) rotate(7)"/>
<path d="M-5.3 0 Q0 -2.7 5.3 0 Q0 2.7 -5.3 0 z" fill="#4d6030" opacity="1" transform="translate(664.9 243.0) rotate(18)"/>
<path d="M-2.1 0 Q0 -1.1 2.1 0 Q0 1.1 -2.1 0 z" fill="#a9b384" opacity="0.9" transform="translate(619.0 298.7) rotate(76)"/>
<path d="M-2.1 0 Q0 -1.0 2.1 0 Q0 1.0 -2.1 0 z" fill="#a9b384" opacity="0.9" transform="translate(633.5 289.7) rotate(-76)"/>
<path d="M-2.1 0 Q0 -0.7 2.1 0 Q0 0.7 -2.1 0 z" fill="#93a068" opacity="0.9" transform="translate(614.6 259.3) rotate(16)"/>
<path d="M-2.4 0 Q0 -1.0 2.4 0 Q0 1.0 -2.4 0 z" fill="#a9b384" opacity="0.9" transform="translate(619.8 289.6) rotate(-40)"/>
<path d="M-2.0 0 Q0 -0.8 2.0 0 Q0 0.8 -2.0 0 z" fill="#93a068" opacity="0.9" transform="translate(627.2 297.4) rotate(48)"/>
<path d="M-2.5 0 Q0 -1.3 2.5 0 Q0 1.3 -2.5 0 z" fill="#7d8c52" opacity="0.9" transform="translate(621.7 249.5) rotate(-30)"/>
<path d="M-1.3 0 Q0 -0.8 1.3 0 Q0 0.8 -1.3 0 z" fill="#c0c69e" opacity="0.9" transform="translate(623.2 249.5) rotate(67)"/>
<path d="M-2.5 0 Q0 -0.9 2.5 0 Q0 0.9 -2.5 0 z" fill="#7d8c52" opacity="0.9" transform="translate(625.2 258.4) rotate(38)"/>
<path d="M-1.5 0 Q0 -1.0 1.5 0 Q0 1.0 -1.5 0 z" fill="#7d8c52" opacity="0.9" transform="translate(618.1 285.6) rotate(59)"/>
<path d="M-2.5 0 Q0 -1.3 2.5 0 Q0 1.3 -2.5 0 z" fill="#93a068" opacity="0.9" transform="translate(621.3 254.0) rotate(5)"/>
<path d="M-1.6 0 Q0 -1.2 1.6 0 Q0 1.2 -1.6 0 z" fill="#a9b384" opacity="0.9" transform="translate(608.6 292.1) rotate(-19)"/>
<path d="M-2.0 0 Q0 -0.7 2.0 0 Q0 0.7 -2.0 0 z" fill="#c0c69e" opacity="0.9" transform="translate(629.1 248.6) rotate(-72)"/>
<path d="M-2.5 0 Q0 -1.1 2.5 0 Q0 1.1 -2.5 0 z" fill="#c0c69e" opacity="0.9" transform="translate(610.2 303.1) rotate(-2)"/>
<path d="M-2.3 0 Q0 -0.7 2.3 0 Q0 0.7 -2.3 0 z" fill="#c0c69e" opacity="0.9" transform="translate(622.8 279.5) rotate(25)"/>
<path d="M-1.4 0 Q0 -0.9 1.4 0 Q0 0.9 -1.4 0 z" fill="#93a068" opacity="0.9" transform="translate(606.0 271.9) rotate(6)"/>
<path d="M-1.7 0 Q0 -1.0 1.7 0 Q0 1.0 -1.7 0 z" fill="#93a068" opacity="0.9" transform="translate(612.6 274.6) rotate(-71)"/>
<path d="M-1.3 0 Q0 -0.8 1.3 0 Q0 0.8 -1.3 0 z" fill="#c0c69e" opacity="0.9" transform="translate(616.7 269.8) rotate(79)"/>
<path d="M-2.6 0 Q0 -1.2 2.6 0 Q0 1.2 -2.6 0 z" fill="#c0c69e" opacity="0.9" transform="translate(626.8 269.0) rotate(24)"/>
<path d="M-2.5 0 Q0 -0.8 2.5 0 Q0 0.8 -2.5 0 z" fill="#c0c69e" opacity="0.9" transform="translate(608.4 243.8) rotate(53)"/>
<path d="M-2.5 0 Q0 -0.8 2.5 0 Q0 0.8 -2.5 0 z" fill="#c0c69e" opacity="0.9" transform="translate(617.2 237.6) rotate(77)"/>
<path d="M-2.3 0 Q0 -0.8 2.3 0 Q0 0.8 -2.3 0 z" fill="#7d8c52" opacity="0.9" transform="translate(626.2 276.6) rotate(71)"/>
<path d="M-1.5 0 Q0 -1.2 1.5 0 Q0 1.2 -1.5 0 z" fill="#c0c69e" opacity="0.9" transform="translate(612.1 293.4) rotate(-67)"/>
<path d="M-1.5 0 Q0 -0.8 1.5 0 Q0 0.8 -1.5 0 z" fill="#93a068" opacity="0.9" transform="translate(625.2 271.8) rotate(21)"/>
<path d="M-2.2 0 Q0 -1.2 2.2 0 Q0 1.2 -2.2 0 z" fill="#c0c69e" opacity="0.9" transform="translate(630.5 304.0) rotate(14)"/>
<path d="M-2.1 0 Q0 -0.9 2.1 0 Q0 0.9 -2.1 0 z" fill="#7d8c52" opacity="0.9" transform="translate(621.4 247.2) rotate(-49)"/>
<path d="M-1.4 0 Q0 -1.0 1.4 0 Q0 1.0 -1.4 0 z" fill="#7d8c52" opacity="0.9" transform="translate(607.9 289.9) rotate(36)"/>
<path d="M-1.2 0 Q0 -0.7 1.2 0 Q0 0.7 -1.2 0 z" fill="#c0c69e" opacity="0.9" transform="translate(613.6 285.5) rotate(32)"/>
<path d="M-1.7 0 Q0 -1.0 1.7 0 Q0 1.0 -1.7 0 z" fill="#a9b384" opacity="0.9" transform="translate(628.6 263.0) rotate(-69)"/>
<path d="M-1.6 0 Q0 -0.9 1.6 0 Q0 0.9 -1.6 0 z" fill="#93a068" opacity="0.9" transform="translate(605.9 297.1) rotate(40)"/>
<path d="M-2.2 0 Q0 -0.6 2.2 0 Q0 0.6 -2.2 0 z" fill="#a9b384" opacity="0.9" transform="translate(610.9 294.4) rotate(0)"/>
<path d="M-2.1 0 Q0 -1.1 2.1 0 Q0 1.1 -2.1 0 z" fill="#93a068" opacity="0.9" transform="translate(631.1 237.1) rotate(63)"/>
<path d="M-2.5 0 Q0 -1.3 2.5 0 Q0 1.3 -2.5 0 z" fill="#a9b384" opacity="0.9" transform="translate(620.5 252.1) rotate(-53)"/>
<path d="M-2.5 0 Q0 -1.2 2.5 0 Q0 1.2 -2.5 0 z" fill="#a9b384" opacity="0.9" transform="translate(626.0 257.3) rotate(-46)"/>
<path d="M-1.8 0 Q0 -0.7 1.8 0 Q0 0.7 -1.8 0 z" fill="#a9b384" opacity="0.9" transform="translate(625.2 299.8) rotate(-23)"/>
<ellipse cx="613.6" cy="263.0" rx="1.4" ry="2.5" fill="#c3c8b2" opacity="0.8"/>
<ellipse cx="634.6" cy="225.8" rx="1.4" ry="2.6" fill="#c3c8b2" opacity="0.8"/>
<ellipse cx="635.8" cy="208.9" rx="1.7" ry="3.0" fill="#c3c8b2" opacity="0.8"/>
<ellipse cx="656.3" cy="215.0" rx="1.3" ry="1.4" fill="#c3c8b2" opacity="0.8"/>
<ellipse cx="643.7" cy="241.5" rx="1.1" ry="2.9" fill="#c3c8b2" opacity="0.8"/>
<ellipse cx="611.1" cy="283.3" rx="1.0" ry="2.3" fill="#c3c8b2" opacity="0.8"/>
<ellipse cx="636.5" cy="237.8" rx="1.8" ry="1.5" fill="#c3c8b2" opacity="0.8"/>
<ellipse cx="661.4" cy="215.8" rx="1.3" ry="2.5" fill="#c3c8b2" opacity="0.8"/>
<ellipse cx="608.6" cy="272.3" rx="1.2" ry="2.8" fill="#c3c8b2" opacity="0.8"/>
<ellipse cx="641.2" cy="284.1" rx="1.8" ry="1.2" fill="#c3c8b2" opacity="0.8"/>
<ellipse cx="656.0" cy="203.7" rx="1.1" ry="2.6" fill="#c3c8b2" opacity="0.8"/>
<ellipse cx="657.0" cy="228.2" rx="1.7" ry="1.3" fill="#c3c8b2" opacity="0.8"/>
<ellipse cx="623.0" cy="275.7" rx="1.9" ry="3.0" fill="#c3c8b2" opacity="0.8"/>
<ellipse cx="639.7" cy="270.5" rx="1.2" ry="2.0" fill="#c3c8b2" opacity="0.8"/>
<ellipse cx="643.8" cy="249.5" rx="1.4" ry="2.5" fill="#c3c8b2" opacity="0.8"/>
<ellipse cx="646.7" cy="222.4" rx="1.8" ry="2.7" fill="#c3c8b2" opacity="0.8"/>
<ellipse cx="640.2" cy="222.6" rx="1.3" ry="2.9" fill="#c3c8b2" opacity="0.8"/>
<ellipse cx="609.9" cy="240.1" rx="2.2" ry="1.8" fill="#c3c8b2" opacity="0.8"/>
<ellipse cx="640.5" cy="255.2" rx="2.1" ry="2.1" fill="#c3c8b2" opacity="0.8"/>
<ellipse cx="608.7" cy="208.7" rx="1.2" ry="2.4" fill="#c3c8b2" opacity="0.8"/>
<ellipse cx="638.9" cy="265.9" rx="1.9" ry="1.3" fill="#c3c8b2" opacity="0.8"/>
<ellipse cx="630.4" cy="263.4" rx="2.1" ry="2.5" fill="#c3c8b2" opacity="0.8"/>
<ellipse cx="634.4" cy="259.1" rx="1.7" ry="1.9" fill="#c3c8b2" opacity="0.8"/>
<ellipse cx="620.6" cy="244.7" rx="1.9" ry="2.3" fill="#c3c8b2" opacity="0.8"/>
<ellipse cx="632.0" cy="227.7" rx="1.7" ry="2.5" fill="#c3c8b2" opacity="0.8"/>
<ellipse cx="645.7" cy="288.0" rx="1.2" ry="2.6" fill="#c3c8b2" opacity="0.8"/>
<ellipse cx="640.0" cy="210.6" rx="2.0" ry="2.1" fill="#c3c8b2" opacity="0.8"/>
<path d="M-2.3 0 Q0 -1.2 2.3 0 Q0 1.2 -2.3 0 z" fill="#6d8042" opacity="0.9" transform="translate(667.2 198.2) rotate(-57)"/>
<path d="M-3.1 0 Q0 -1.6 3.1 0 Q0 1.6 -3.1 0 z" fill="#5f7238" opacity="0.9" transform="translate(643.1 222.5) rotate(76)"/>
<path d="M-3.0 0 Q0 -1.1 3.0 0 Q0 1.1 -3.0 0 z" fill="#5f7238" opacity="0.9" transform="translate(628.6 204.2) rotate(-58)"/>
<path d="M-3.2 0 Q0 -1.3 3.2 0 Q0 1.3 -3.2 0 z" fill="#5f7238" opacity="0.9" transform="translate(632.4 215.5) rotate(-70)"/>
<path d="M-1.7 0 Q0 -1.1 1.7 0 Q0 1.1 -1.7 0 z" fill="#5f7238" opacity="0.9" transform="translate(634.6 231.8) rotate(71)"/>
<path d="M-2.9 0 Q0 -1.1 2.9 0 Q0 1.1 -2.9 0 z" fill="#5f7238" opacity="0.9" transform="translate(637.9 218.4) rotate(-68)"/>
<path d="M-2.9 0 Q0 -1.4 2.9 0 Q0 1.4 -2.9 0 z" fill="#5f7238" opacity="0.9" transform="translate(635.4 210.8) rotate(42)"/>
<path d="M-2.8 0 Q0 -1.2 2.8 0 Q0 1.2 -2.8 0 z" fill="#7d8c52" opacity="0.9" transform="translate(634.4 228.9) rotate(45)"/>
<path d="M-1.9 0 Q0 -1.1 1.9 0 Q0 1.1 -1.9 0 z" fill="#5f7238" opacity="0.9" transform="translate(650.0 242.9) rotate(-62)"/>
<path d="M-2.0 0 Q0 -0.8 2.0 0 Q0 0.8 -2.0 0 z" fill="#7d8c52" opacity="0.9" transform="translate(650.7 216.9) rotate(-34)"/>
<path d="M-3.1 0 Q0 -1.4 3.1 0 Q0 1.4 -3.1 0 z" fill="#5f7238" opacity="0.9" transform="translate(626.7 218.4) rotate(-12)"/>
<path d="M-3.1 0 Q0 -1.1 3.1 0 Q0 1.1 -3.1 0 z" fill="#7d8c52" opacity="0.9" transform="translate(632.2 206.0) rotate(-19)"/>
<path d="M-3.2 0 Q0 -1.5 3.2 0 Q0 1.5 -3.2 0 z" fill="#5f7238" opacity="0.9" transform="translate(659.0 204.2) rotate(35)"/>
<path d="M-2.0 0 Q0 -1.5 2.0 0 Q0 1.5 -2.0 0 z" fill="#6d8042" opacity="0.9" transform="translate(659.9 217.8) rotate(-66)"/>
<path d="M-1.7 0 Q0 -0.9 1.7 0 Q0 0.9 -1.7 0 z" fill="#5f7238" opacity="0.9" transform="translate(634.1 210.4) rotate(72)"/>
<path d="M-2.3 0 Q0 -1.2 2.3 0 Q0 1.2 -2.3 0 z" fill="#7d8c52" opacity="0.9" transform="translate(613.8 214.2) rotate(-46)"/>
<path d="M-2.8 0 Q0 -1.3 2.8 0 Q0 1.3 -2.8 0 z" fill="#5f7238" opacity="0.9" transform="translate(651.6 211.5) rotate(-43)"/>
<path d="M-2.3 0 Q0 -0.9 2.3 0 Q0 0.9 -2.3 0 z" fill="#6d8042" opacity="0.9" transform="translate(658.7 225.8) rotate(52)"/>
<path d="M-2.2 0 Q0 -1.0 2.2 0 Q0 1.0 -2.2 0 z" fill="#5f7238" opacity="0.9" transform="translate(624.7 213.2) rotate(-70)"/>
<path d="M-1.6 0 Q0 -1.4 1.6 0 Q0 1.4 -1.6 0 z" fill="#7d8c52" opacity="0.9" transform="translate(653.8 223.1) rotate(-4)"/>
<path d="M-1.9 0 Q0 -1.4 1.9 0 Q0 1.4 -1.9 0 z" fill="#6d8042" opacity="0.9" transform="translate(649.5 245.8) rotate(-49)"/>
<path d="M-1.7 0 Q0 -1.1 1.7 0 Q0 1.1 -1.7 0 z" fill="#6d8042" opacity="0.9" transform="translate(625.1 230.9) rotate(20)"/>
</g>
<g filter="url(#b1)">
<path d="M618 310 C620 284 628 264 646 252 C656 246 666 240 680 240 L712 246 L716 310 z" fill="#1a1b1b" stroke="none" stroke-width="0.6" />
<path d="M640 310 C642 286 650 268 664 256 L700 250 L704 310 z" fill="#202121" stroke="none" stroke-width="0.6" />
<path d="M659 200 C661 192 676 189 692 189 C708 190 719 197 722.6 208 C725 220 724.6 232 720 239 C714 245 704 245 698 240 L699 206 C690 197 674 196 667 201 C665 212 664.6 224 666 236 C660 228 657.6 212 659 200 z" fill="#281c16" stroke="none" stroke-width="0.6" />
<path d="M702 200 C713 202 721 213 721 225 C721 236 714 243 706 241 z" fill="#35261f" stroke="none" stroke-width="0.6" />
<path d="M660 198 C662 204 661 214 663 222 C660 216 658 206 660 198 z" fill="#2a1c16" stroke="#2a1c16" stroke-width="1.2" />
<path d="M676 240 L702 230 L707 252 L684 256 z" fill="#7e5a44" stroke="none" stroke-width="0.6" />
<linearGradient id="gface" x1="0" x2="1" y1="0" y2="0"><stop offset="0" stop-color="#85604a"/><stop offset="0.3" stop-color="#aa8266"/><stop offset="0.7" stop-color="#b58d70"/><stop offset="1" stop-color="#94705a"/></linearGradient>
<path d="M664.6 200 C668 194.6 695 193 701.6 199 C705 208 704.6 224 701.6 232 C698 241 688 247 680 246.6 C672 246 666 238 664 228 C662.2 218 662.6 208 664.6 200 z" fill="url(#gface)" stroke="none" stroke-width="0.6" />
<ellipse cx="684" cy="202" rx="12" ry="5" fill="#c9a284" opacity="0.75"/>
<ellipse cx="691" cy="224" rx="7" ry="7" fill="#c0977a" opacity="0.6"/>
<ellipse cx="669" cy="234" rx="5" ry="8" fill="#7c5a46" opacity="0.45"/>
<ellipse cx="668.4" cy="210.6" rx="4.6" ry="3.2" fill="#5a3c2e" opacity="0.6"/>
<ellipse cx="688" cy="210.8" rx="5.6" ry="3.4" fill="#5a3c2e" opacity="0.6"/>
</g>
<g filter="url(#b08)">
<path d="M664.4 207.4 C667 205.2 671 205.4 673.2 207.2" fill="none" stroke="#2c1a12" stroke-width="1.4" />
<path d="M681.6 206.8 C685.6 204.6 691 205 694.4 207.6" fill="none" stroke="#2c1a12" stroke-width="1.5" />
<ellipse cx="668.2" cy="211" rx="2.7" ry="1.5" fill="#22140f"/>
<ellipse cx="687.8" cy="211.2" rx="3.1" ry="1.6" fill="#22140f"/>
<path d="M673.6 213 C672.6 216 671.8 219 672.4 221.4 C674 222.8 677 222.8 678.8 221.4" fill="none" stroke="#7a5240" stroke-width="1.0" opacity=".8"/>
<ellipse cx="675.2" cy="217.6" rx="1.8" ry="3.4" fill="#c4997c" opacity=".6"/>
<path d="M669.4 231 C673 229.8 677 230.2 681.8 232.4" fill="none" stroke="#6e362e" stroke-width="1.6" />
<path d="M671 233.6 C674 234.8 677 234.8 680 234" fill="none" stroke="#9a6252" stroke-width="1.0" opacity=".8"/>
<ellipse cx="705.6" cy="229" rx="2" ry="3.4" fill="#a27a5e"/>
</g>
<g filter="url(#b06)">
<path d="M653 250.8 L749.4 243.6 L762.6 310 L656.8 310 z" fill="#d2d6d8" stroke="none" stroke-width="0.6" />
<path d="M655 278 L722 273 L731 310 L657 310 z" fill="#e3e6e7" stroke="none" stroke-width="0" opacity=".9"/>
<path d="M748.6 243.8 L753.6 243.2 L767 310 L762 310 z" fill="#f0f2f2" stroke="none" stroke-width="0.6" />
<path d="M659.7 253.4 L685 251.2 L685.8 262.8 L660.6 264.8 z" fill="#555d61" stroke="none" stroke-width="0.6" />
<path d="M685 251.2 L740.6 246.2 L741 250 L685.3 255 z" fill="#5a6266" stroke="none" stroke-width="0.6" />
<path d="M739.6 246.4 L748.6 245.4 L760.6 310 L750.4 310 z" fill="#7d8589" stroke="none" stroke-width="0.6" />
<path d="M720 251.6 L723 251.4 L733.6 310 L730.6 310 z" fill="#586064" stroke="none" stroke-width="0.6" />
<path d="M686 256.4 L697 255.4 L697.4 262.6 L686.4 263.6 z" fill="#e7eaeb" stroke="none" stroke-width="0.6" />
<path d="M698 255.4 L711.6 254.2 L713 272.6 L699 274 z" fill="#e7eaeb" stroke="none" stroke-width="0.6" />
<path d="M713 254.2 L719.6 253.6 L722 271.6 L714.6 272.6 z" fill="#e7eaeb" stroke="none" stroke-width="0.6" />
<path d="M674 266.2 L698 264 L698.6 274.6 L674.8 277 z" fill="#dfe2e3" stroke="#424a4e" stroke-width="1.2" />
<path d="M698.6 274.6 L722 272.4" fill="none" stroke="#4a5256" stroke-width="1.1" />
<path d="M723 252.4 L738.6 251 L740 262.4 L724.6 264 z" fill="#e7eaeb" stroke="none" stroke-width="0.6" />
<path d="M725 265.6 L740.4 264 L743.4 283 L728 284.8 z" fill="#e7eaeb" stroke="none" stroke-width="0.6" />
<path d="M728.4 286.6 L743.8 285 L747.6 306 L731.8 308 z" fill="#e7eaeb" stroke="none" stroke-width="0.6" />
<path d="M724.8 264.6 L740.4 263 M728 285.6 L743.6 284" fill="none" stroke="#586064" stroke-width="0.9" />
</g>
<g filter="url(#b1)">
<path d="M700 246 C701 240 706 236 712 236.6 C718 234.6 727 234.6 731 238 C733 241 732 245 730 246.6 L722 247.6 C722 251 719 254 716 253 C713 252 713 248 713.6 246.6 C709 250 703 251 700 246 z" fill="#c79a86" stroke="none" stroke-width="0.6" />
<path d="M713 239 C715 237.4 718 237.4 720 238.6" fill="none" stroke="#e8d4cc" stroke-width="1.0" />
</g>
<linearGradient id="gname" x1="0" x2="0" y1="0" y2="1"><stop offset="0" stop-color="#000" stop-opacity="0"/><stop offset="1" stop-color="#000" stop-opacity="0.55"/></linearGradient>
<text x="606.20" y="301.86" font-size="7.6" fill="#f4f4f4" font-weight="bold" font-family='"Liberation Sans",sans-serif' textLength="45.00" lengthAdjust="spacingAndGlyphs" filter="url(#b03)">Alina Cristea</text>
</g>
</svg>
</body></html>
